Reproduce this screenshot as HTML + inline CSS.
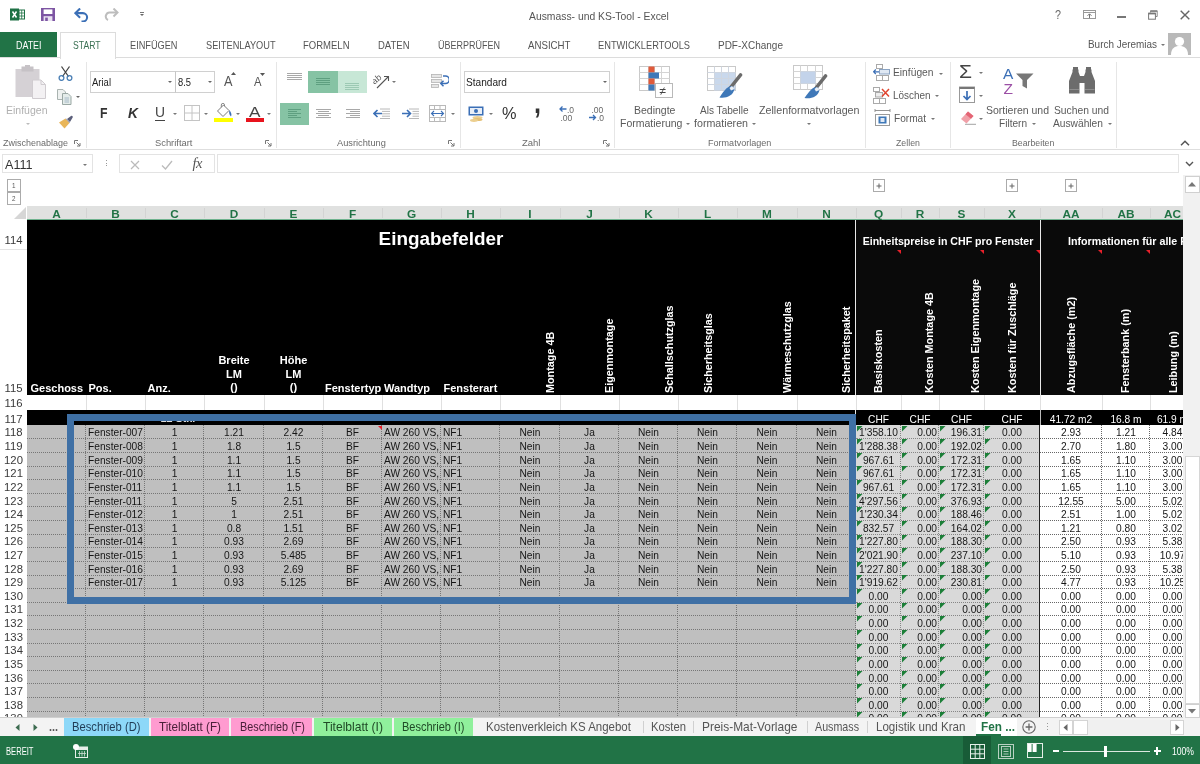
<!DOCTYPE html>
<html lang="de"><head><meta charset="utf-8"><title>Ausmass- und KS-Tool - Excel</title>
<style>
*{box-sizing:border-box;margin:0;padding:0}
html,body{width:1200px;height:764px;overflow:hidden;background:#fff}
body{position:relative;font-family:"Liberation Sans",sans-serif;color:#444;font-size:11px}
#w{position:absolute;left:0;top:0;width:1200px;height:764px;will-change:transform}
.abs{position:absolute}
.t{position:absolute;white-space:nowrap;line-height:1;color:#444;transform-origin:0 0}
#grid{position:absolute;left:0;width:1183px;height:511.5px;overflow:hidden;background:#fff}
.c{position:absolute;white-space:nowrap;overflow:hidden;font-size:10.2px;line-height:1;height:12.5px;color:#151515;text-align:center}
.rh{position:absolute;left:0;width:27px;text-align:center;font-size:11.3px;color:#3a3a3a;line-height:1}
.ch{position:absolute;top:1px;height:13px;line-height:14px;text-align:center;font-weight:bold;font-size:11.8px;color:#217346}
.vt{position:absolute;color:#fff;font-weight:bold;font-size:10.8px;white-space:nowrap;transform-origin:0 0;transform:rotate(-90deg);line-height:12px;height:12px}
.hb{position:absolute;color:#fff;font-weight:bold;font-size:11px;white-space:nowrap;line-height:13.6px;text-align:center}
.dl{height:0}

.gl{position:absolute;top:62px;width:1px;height:86px;background:#e6e6e6}
</style></head>
<body>
<div id="w">
<svg class="abs" style="left:10px;top:8px" width="15" height="13" viewBox="0 0 15 13"><rect x="0" y="0.5" width="9" height="12" fill="#1e7145"/><rect x="9" y="2" width="5.5" height="9" fill="#fff" stroke="#1e7145" stroke-width="1"/><path d="M9,5H14.5M9,8H14.5M11.7,2V11" stroke="#1e7145" stroke-width="0.8"/><path d="M2.5,3.5L6.5,9.5M6.5,3.5L2.5,9.5" stroke="#fff" stroke-width="1.5"/></svg>
<svg class="abs" style="left:41px;top:8px" width="14" height="13" viewBox="0 0 14 13"><path d="M0,0H14V13H0Z" fill="#7d55a3"/><rect x="2.6" y="1.4" width="8.8" height="4.6" fill="#fff"/><rect x="2.6" y="8.2" width="8.8" height="4.8" fill="#e9e2f1"/><rect x="4.2" y="9.6" width="2.6" height="3.4" fill="#7d55a3"/></svg>
<svg class="abs" style="left:73.5px;top:7.5px" width="15" height="14" viewBox="0 0 16 15"><path d="M2,5.5H9.5A4.5,4.5 0 0 1 9.5,14.5H8" fill="none" stroke="#3b6fb6" stroke-width="2.2"/><path d="M6.5,0.5L1.5,5.5L6.5,10.5" fill="none" stroke="#3b6fb6" stroke-width="2.2"/></svg>
<svg class="abs" style="left:104px;top:8px" width="15" height="13" viewBox="0 0 15 13"><path d="M13,4.5H6.5A4,4 0 0 0 4,12" fill="none" stroke="#bdbdbd" stroke-width="2"/><path d="M9.5,0.5L13.5,4.5L9.5,8.5" fill="none" stroke="#bdbdbd" stroke-width="2"/></svg>
<div class="abs" style="left:140px;top:11.5px;width:4px;height:1px;background:#777;"></div>
<svg class="abs" style="left:140px;top:13.5px" width="4" height="2.5" viewBox="0 0 4 2.5"><polygon points="0,0 4,0 2,2" fill="#666"/></svg>
<div class="t" style="left:529.0px;top:11px;font-size:11.3px;color:#555;transform:scaleX(0.917);">Ausmass- und KS-Tool - Excel</div>
<div class="t" style="left:1055.0px;top:9px;font-size:12.5px;color:#666;transform:scaleX(0.863);">?</div>
<svg class="abs" style="left:1083px;top:10px" width="13" height="9" viewBox="0 0 13 9"><rect x="0.5" y="0.5" width="12" height="8" fill="#fff" stroke="#999"/><path d="M0.5,2.5H12.5" stroke="#999"/><path d="M6.5,8V4M4.5,5.8L6.5,3.8L8.5,5.8" fill="none" stroke="#777"/></svg>
<div class="abs" style="left:1117px;top:16px;width:9px;height:1.6px;background:#777;"></div>
<svg class="abs" style="left:1148px;top:10px" width="10" height="10" viewBox="0 0 10 10"><path d="M2.5,2.5V0.8H9.2V6.5H7.5" fill="none" stroke="#888" stroke-width="1"/><path d="M2.5,1.2H9.2" stroke="#888" stroke-width="1.6"/><rect x="0.6" y="3.2" width="6.8" height="6" fill="#fff" stroke="#777" stroke-width="1"/><path d="M0.6,3.6H7.4" stroke="#777" stroke-width="1.6"/></svg>
<svg class="abs" style="left:1180px;top:10px" width="10" height="10" viewBox="0 0 10 10"><path d="M0.7,0.7L9.3,9.3M9.3,0.7L0.7,9.3" stroke="#666" stroke-width="1.4"/></svg>
<div class="abs" style="left:0px;top:32px;width:57px;height:25.5px;background:#217346;"></div>
<div class="t" style="left:16.0px;top:40px;font-size:10.8px;color:#fff;transform:scaleX(0.822);">DATEI</div>
<div class="abs" style="left:0px;top:57px;width:1200px;height:1px;background:#dcdcdc;"></div>
<div class="abs" style="left:59.5px;top:31.5px;width:56px;height:27px;background:#fff;border:1px solid #dcdcdc;border-bottom:none"></div>
<div class="t" style="left:73.0px;top:40px;font-size:10.8px;color:#3a7053;transform:scaleX(0.799);">START</div>
<div class="t" style="left:130.0px;top:40px;font-size:10.8px;color:#555;transform:scaleX(0.851);">EINF&Uuml;GEN</div>
<div class="t" style="left:205.5px;top:40px;font-size:10.8px;color:#555;transform:scaleX(0.854);">SEITENLAYOUT</div>
<div class="t" style="left:303.0px;top:40px;font-size:10.8px;color:#555;transform:scaleX(0.881);">FORMELN</div>
<div class="t" style="left:378.0px;top:40px;font-size:10.8px;color:#555;transform:scaleX(0.880);">DATEN</div>
<div class="t" style="left:437.5px;top:40px;font-size:10.8px;color:#555;transform:scaleX(0.833);">&Uuml;BERPR&Uuml;FEN</div>
<div class="t" style="left:527.5px;top:40px;font-size:10.8px;color:#555;transform:scaleX(0.897);">ANSICHT</div>
<div class="t" style="left:598.0px;top:40px;font-size:10.8px;color:#555;transform:scaleX(0.860);">ENTWICKLERTOOLS</div>
<div class="t" style="left:718.0px;top:40px;font-size:10.8px;color:#555;transform:scaleX(0.925);">PDF-XChange</div>
<div class="t" style="left:1088.0px;top:39px;font-size:11.3px;color:#555;transform:scaleX(0.879);">Burch Jeremias</div>
<svg class="abs" style="left:1161px;top:44.0px" width="4" height="2.5" viewBox="0 0 4 2.5"><polygon points="0,0 4,0 2,2" fill="#777"/></svg>
<svg class="abs" style="left:1168px;top:33px" width="23" height="22" viewBox="0 0 23 22"><rect width="23" height="22" fill="#b9b9b9"/><circle cx="11.5" cy="8.5" r="4.6" fill="#fff"/><path d="M3,22C3,15 7,13 11.5,13C16,13 20,15 20,22Z" fill="#fff"/></svg>
<div class="abs" style="left:0px;top:148.6px;width:1200px;height:1px;background:#dedede;"></div>
<div class="gl" style="left:86px"></div>
<div class="gl" style="left:275.5px"></div>
<div class="gl" style="left:460px"></div>
<div class="gl" style="left:614px"></div>
<div class="gl" style="left:865px"></div>
<div class="gl" style="left:950px"></div>
<div class="gl" style="left:1116px"></div>
<svg class="abs" style="left:15px;top:65px" width="31" height="34" viewBox="0 0 31 34"><rect x="0.5" y="4" width="24" height="28" fill="#d5d1d5"/><rect x="6.5" y="1.5" width="12" height="5" fill="#c6c2c6"/><rect x="10" y="0" width="5" height="3" fill="#c6c2c6"/><path d="M17.5,15H26L30.5,19.5V33.5H17.5Z" fill="#f3f1f3" stroke="#d0ccd0"/><path d="M26,15V19.5H30.5" fill="none" stroke="#d0ccd0"/></svg>
<div class="t" style="left:6.0px;top:105px;font-size:10.8px;color:#b0b0b0;transform:scaleX(0.973);">Einf&uuml;gen</div>
<svg class="abs" style="left:25.5px;top:122.5px" width="4" height="2.5" viewBox="0 0 4 2.5"><polygon points="0,0 4,0 2,2" fill="#bbb"/></svg>
<svg class="abs" style="left:58px;top:66px" width="15" height="15" viewBox="0 0 15 15"><path d="M3.5,0.5L10.5,10.5M11.5,0.5L4.5,10.5" stroke="#444" stroke-width="1.3" fill="none"/><circle cx="3.5" cy="12" r="2.4" fill="none" stroke="#4a7fb5" stroke-width="1.3"/><circle cx="11.5" cy="12" r="2.4" fill="none" stroke="#4a7fb5" stroke-width="1.3"/></svg>
<svg class="abs" style="left:57px;top:89px" width="15" height="16" viewBox="0 0 15 16"><path d="M0.5,0.5H6L8.5,3V10.5H0.5Z" fill="#eef1f0" stroke="#a9b3b0"/><path d="M5.5,4.5H11L14,7.5V15.5H5.5Z" fill="#e4ecea" stroke="#9aa8a4"/><path d="M7.5,9H12M7.5,11H12M7.5,13H12" stroke="#9fb4c4" stroke-width="0.9"/></svg>
<svg class="abs" style="left:76px;top:96.0px" width="4" height="2.5" viewBox="0 0 4 2.5"><polygon points="0,0 4,0 2,2" fill="#666"/></svg>
<svg class="abs" style="left:58px;top:115px" width="16" height="14" viewBox="0 0 16 14"><path d="M9,4L12,7L14.8,2.2A1.2,1.2 0 0 0 13,1Z" fill="#5b5f7a"/><path d="M1,7.5L7.5,3.5L11.5,8L6.5,13.5Z" fill="#e9b65a"/><path d="M7.5,3.5L9,4L12,7L11.5,8Z" fill="#8a8fa5"/></svg>
<div class="t" style="left:3.0px;top:138px;font-size:9.9px;color:#6a6a6a;transform:scaleX(0.909);">Zwischenablage</div>
<svg class="abs" style="left:74px;top:140px" width="7" height="7" viewBox="0 0 7 7"><path d="M0.5,4V0.5H4" fill="none" stroke="#777" stroke-width="1"/><path d="M2.5,2.5L6,6M6,3V6H3" fill="none" stroke="#777" stroke-width="1"/></svg>
<div class="abs" style="left:90px;top:71px;width:85.5px;height:21.5px;background:#fff;border:1px solid #d0d0d0;"></div>
<div class="abs" style="left:175px;top:71px;width:40px;height:21.5px;background:#fff;border:1px solid #d0d0d0;border-left:1px solid #c6c6c6"></div>
<div class="t" style="left:92.0px;top:77px;font-size:11.8px;color:#222;transform:scaleX(0.805);">Arial</div>
<svg class="abs" style="left:168px;top:80.5px" width="4" height="2.5" viewBox="0 0 4 2.5"><polygon points="0,0 4,0 2,2" fill="#666"/></svg>
<div class="t" style="left:177.5px;top:77px;font-size:11.8px;color:#222;transform:scaleX(0.792);">8.5</div>
<svg class="abs" style="left:207.5px;top:80.5px" width="4" height="2.5" viewBox="0 0 4 2.5"><polygon points="0,0 4,0 2,2" fill="#666"/></svg>
<div class="t" style="left:224.0px;top:74px;font-size:14.5px;color:#555;transform:scaleX(0.879);">A</div>
<svg class="abs" style="left:231px;top:72px" width="5" height="3" viewBox="0 0 5 3"><polygon points="0,3 2.5,0 5,3" fill="#555"/></svg>
<div class="t" style="left:253.5px;top:75px;font-size:13px;color:#555;transform:scaleX(0.865);">A</div>
<svg class="abs" style="left:260px;top:72.5px" width="5" height="3" viewBox="0 0 5 3"><polygon points="0,0 5,0 2.5,3" fill="#555"/></svg>
<div class="t" style="left:100.0px;top:105px;font-size:15px;color:#333;transform:scaleX(0.819);font-weight:bold;">F</div>
<div class="t" style="left:128.0px;top:105px;font-size:15px;color:#333;transform:scaleX(0.923);font-weight:bold;font-style:italic;">K</div>
<div class="t" style="left:155.0px;top:104px;font-size:15px;color:#444;transform:scaleX(0.923);">U</div>
<div class="abs" style="left:155px;top:119.5px;width:10px;height:1.2px;background:#444;"></div>
<svg class="abs" style="left:173px;top:112.5px" width="4" height="2.5" viewBox="0 0 4 2.5"><polygon points="0,0 4,0 2,2" fill="#777"/></svg>
<svg class="abs" style="left:184px;top:105px" width="16" height="16" viewBox="0 0 16 16"><rect x="0.5" y="0.5" width="15" height="15" fill="#fff" stroke="#c4c4c4"/><path d="M8,0.5V15.5M0.5,8H15.5" stroke="#c4c4c4"/></svg>
<svg class="abs" style="left:204px;top:112.5px" width="4" height="2.5" viewBox="0 0 4 2.5"><polygon points="0,0 4,0 2,2" fill="#777"/></svg>
<svg class="abs" style="left:215px;top:103px" width="18" height="15" viewBox="0 0 18 15"><path d="M2.5,8L8.5,2L14,7.5L8,13.5Z" fill="#fff" stroke="#7a7a7a" stroke-width="1"/><path d="M6.3,4.2V2A1.6,1.6 0 0 1 9.5,2V3.2" fill="none" stroke="#7a7a7a" stroke-width="0.9"/><path d="M14.3,7.2C16.3,9.4 17,11.4 16,13.4C14.4,12.2 13.8,10 14.3,7.2Z" fill="#3b6fb6"/></svg>
<div class="abs" style="left:214px;top:117.8px;width:18.5px;height:4.2px;background:#ffff00;"></div>
<svg class="abs" style="left:235.5px;top:112.5px" width="4" height="2.5" viewBox="0 0 4 2.5"><polygon points="0,0 4,0 2,2" fill="#777"/></svg>
<div class="t" style="left:248.5px;top:105px;font-size:14.5px;color:#444;transform:scaleX(1.189);">A</div>
<div class="abs" style="left:246px;top:117.8px;width:17.5px;height:4.2px;background:#e8131d;"></div>
<svg class="abs" style="left:266.5px;top:112.5px" width="4" height="2.5" viewBox="0 0 4 2.5"><polygon points="0,0 4,0 2,2" fill="#777"/></svg>
<div class="t" style="left:155.0px;top:138px;font-size:9.9px;color:#6a6a6a;transform:scaleX(0.947);">Schriftart</div>
<svg class="abs" style="left:265px;top:140px" width="7" height="7" viewBox="0 0 7 7"><path d="M0.5,4V0.5H4" fill="none" stroke="#777" stroke-width="1"/><path d="M2.5,2.5L6,6M6,3V6H3" fill="none" stroke="#777" stroke-width="1"/></svg>
<svg class="abs" style="left:287px;top:73px" width="15" height="8" viewBox="0 0 15 8"><rect x="0" y="0" width="15" height="1" fill="#a8a8a8"/><rect x="0" y="2" width="15" height="1" fill="#a8a8a8"/><rect x="0" y="4" width="15" height="1" fill="#a8a8a8"/><rect x="0" y="6" width="15" height="1" fill="#a8a8a8"/></svg>
<div class="abs" style="left:308px;top:71px;width:29.5px;height:21.5px;background:#86c3a4;"></div>
<svg class="abs" style="left:316px;top:78px" width="14" height="8" viewBox="0 0 14 8"><rect x="0" y="0" width="14" height="1" fill="#5e9f80"/><rect x="0" y="2" width="14" height="1" fill="#5e9f80"/><rect x="0" y="4" width="14" height="1" fill="#5e9f80"/><rect x="0" y="6" width="14" height="1" fill="#5e9f80"/></svg>
<div class="abs" style="left:337.5px;top:71px;width:29px;height:21.5px;background:#c7e7d6;"></div>
<svg class="abs" style="left:345px;top:83px" width="14" height="8" viewBox="0 0 14 8"><rect x="0" y="0" width="14" height="1" fill="#9cc9b3"/><rect x="0" y="2" width="14" height="1" fill="#9cc9b3"/><rect x="0" y="4" width="14" height="1" fill="#9cc9b3"/><rect x="0" y="6" width="14" height="1" fill="#9cc9b3"/></svg>
<div class="abs" style="left:280px;top:103px;width:29px;height:21.5px;background:#86c3a4;"></div>
<svg class="abs" style="left:288px;top:109px" width="13" height="10" viewBox="0 0 13 10"><rect x="0" y="0" width="13" height="1" fill="#5e9f80"/><rect x="0" y="2" width="9" height="1" fill="#5e9f80"/><rect x="0" y="4" width="13" height="1" fill="#5e9f80"/><rect x="0" y="6" width="9" height="1" fill="#5e9f80"/><rect x="0" y="8" width="13" height="1" fill="#5e9f80"/></svg>
<svg class="abs" style="left:316px;top:109px" width="15" height="10" viewBox="0 0 15 10"><rect x="0.0" y="0" width="15" height="1" fill="#a8a8a8"/><rect x="2.0" y="2" width="11" height="1" fill="#a8a8a8"/><rect x="0.0" y="4" width="15" height="1" fill="#a8a8a8"/><rect x="2.0" y="6" width="11" height="1" fill="#a8a8a8"/><rect x="0.0" y="8" width="15" height="1" fill="#a8a8a8"/></svg>
<svg class="abs" style="left:346px;top:109px" width="14" height="10" viewBox="0 0 14 10"><rect x="0" y="0" width="14" height="1" fill="#a8a8a8"/><rect x="4" y="2" width="10" height="1" fill="#a8a8a8"/><rect x="0" y="4" width="14" height="1" fill="#a8a8a8"/><rect x="4" y="6" width="10" height="1" fill="#a8a8a8"/><rect x="0" y="8" width="14" height="1" fill="#a8a8a8"/></svg>
<svg class="abs" style="left:373px;top:72px" width="17" height="17" viewBox="0 0 17 17"><text x="0" y="9" font-family="Liberation Sans,sans-serif" font-size="9" fill="#555" transform="rotate(-38 6 9)">ab</text><path d="M4,16L15,5M11,4.5H15.5V9" fill="none" stroke="#555" stroke-width="1.1"/></svg>
<svg class="abs" style="left:391.5px;top:80.5px" width="4" height="2.5" viewBox="0 0 4 2.5"><polygon points="0,0 4,0 2,2" fill="#777"/></svg>
<svg class="abs" style="left:431px;top:74px" width="18" height="14" viewBox="0 0 18 14"><rect x="0.5" y="0.5" width="10" height="3" fill="#e6e6e6" stroke="#b5b5b5" stroke-width="0.8"/><rect x="0.5" y="5.5" width="10" height="3" fill="#e6e6e6" stroke="#b5b5b5" stroke-width="0.8"/><rect x="0.5" y="10.5" width="7" height="3" fill="#e6e6e6" stroke="#b5b5b5" stroke-width="0.8"/><path d="M12,2H14.5A2.5,2.5 0 0 1 14.5,9.5H10" fill="none" stroke="#3b6fb6" stroke-width="1.5"/><path d="M12.5,6.8L9.8,9.5L12.5,12.2" fill="none" stroke="#3b6fb6" stroke-width="1.5"/></svg>
<svg class="abs" style="left:373px;top:107.5px" width="17" height="11" viewBox="0 0 17 11"><path d="M7,1H17M9,3.4H17M9,5.8H17M9,8.2H17M7,10.5H17" stroke="#b0b0b0" stroke-width="0.9"/><path d="M9,5.5H1.2M4.5,2L1,5.5L4.5,9" fill="none" stroke="#3b6fb6" stroke-width="1.6"/></svg>
<svg class="abs" style="left:402px;top:107.5px" width="17" height="11" viewBox="0 0 17 11"><path d="M7,1H17M10.5,3.4H17M10.5,5.8H17M10.5,8.2H17M7,10.5H17" stroke="#b0b0b0" stroke-width="0.9"/><path d="M0,5.5H8M5,2L8.5,5.5L5,9" fill="none" stroke="#3b6fb6" stroke-width="1.6"/></svg>
<svg class="abs" style="left:429px;top:105px" width="17" height="17" viewBox="0 0 17 17"><rect x="0.5" y="0.5" width="16" height="16" fill="#fff" stroke="#b9b9b9"/><path d="M0.5,4.5H16.5M0.5,12.5H16.5M5.5,0.5V4.5M11,0.5V4.5M5.5,12.5V16.5M11,12.5V16.5" stroke="#b9b9b9"/><path d="M2.5,8.5H14.5M5,6L2.5,8.5L5,11M12,6L14.5,8.5L12,11" fill="none" stroke="#3b6fb6" stroke-width="1.1"/></svg>
<svg class="abs" style="left:450.5px;top:112.5px" width="4" height="2.5" viewBox="0 0 4 2.5"><polygon points="0,0 4,0 2,2" fill="#777"/></svg>
<div class="t" style="left:336.5px;top:138px;font-size:9.9px;color:#6a6a6a;transform:scaleX(0.937);">Ausrichtung</div>
<svg class="abs" style="left:448px;top:140px" width="7" height="7" viewBox="0 0 7 7"><path d="M0.5,4V0.5H4" fill="none" stroke="#777" stroke-width="1"/><path d="M2.5,2.5L6,6M6,3V6H3" fill="none" stroke="#777" stroke-width="1"/></svg>
<div class="abs" style="left:463.5px;top:71px;width:146.5px;height:21.5px;background:#fff;border:1px solid #d0d0d0;"></div>
<div class="t" style="left:465.5px;top:77px;font-size:11.8px;color:#222;transform:scaleX(0.856);">Standard</div>
<svg class="abs" style="left:603px;top:80.5px" width="4" height="2.5" viewBox="0 0 4 2.5"><polygon points="0,0 4,0 2,2" fill="#666"/></svg>
<svg class="abs" style="left:468px;top:105.5px" width="17" height="16" viewBox="0 0 17 16"><rect x="0.5" y="0.5" width="15" height="9" fill="#3b6fb6"/><rect x="2" y="2" width="12" height="6" fill="#e8eef7"/><circle cx="8" cy="5" r="2" fill="#3b6fb6"/><ellipse cx="9.5" cy="11.5" rx="5" ry="1.6" fill="#eccf8f"/><ellipse cx="9.5" cy="13.5" rx="5" ry="1.6" fill="#e4bf75"/><ellipse cx="6" cy="14.5" rx="4" ry="1.4" fill="#eccf8f"/></svg>
<svg class="abs" style="left:488.5px;top:112.5px" width="4" height="2.5" viewBox="0 0 4 2.5"><polygon points="0,0 4,0 2,2" fill="#777"/></svg>
<div class="t" style="left:502.0px;top:105px;font-size:17px;color:#333;transform:scaleX(0.959);">%</div>
<div class="t" style="left:534.0px;top:88px;font-size:30px;color:#333;transform:scaleX(0.840);font-weight:bold;">,</div>
<svg class="abs" style="left:559px;top:105px" width="18" height="17" viewBox="0 0 18 17"><text x="8" y="7.5" font-family="Liberation Sans,sans-serif" font-size="8.5" fill="#666">.0</text><text x="1.5" y="16" font-family="Liberation Sans,sans-serif" font-size="8.5" fill="#666">.00</text><path d="M7.5,4H1.2M3.5,1.5L1,4L3.5,6.5" fill="none" stroke="#3b6fb6" stroke-width="1.3"/></svg>
<svg class="abs" style="left:588px;top:105px" width="18" height="17" viewBox="0 0 18 17"><text x="3.5" y="7.5" font-family="Liberation Sans,sans-serif" font-size="8.5" fill="#666">.00</text><text x="9" y="16" font-family="Liberation Sans,sans-serif" font-size="8.5" fill="#666">.0</text><path d="M1,12.5H7.3M5,10L7.5,12.5L5,15" fill="none" stroke="#3b6fb6" stroke-width="1.3"/></svg>
<div class="t" style="left:521.5px;top:138px;font-size:9.9px;color:#6a6a6a;transform:scaleX(0.961);">Zahl</div>
<svg class="abs" style="left:603px;top:140px" width="7" height="7" viewBox="0 0 7 7"><path d="M0.5,4V0.5H4" fill="none" stroke="#777" stroke-width="1"/><path d="M2.5,2.5L6,6M6,3V6H3" fill="none" stroke="#777" stroke-width="1"/></svg>
<svg class="abs" style="left:639px;top:66px" width="34" height="32" viewBox="0 0 34 32"><rect x="0.5" y="0.5" width="30" height="24" fill="#fff" stroke="#c9c9c9"/><path d="M0.5,6.5H30.5M0.5,12.5H30.5M0.5,18.5H30.5M9.5,0.5V24.5M15.5,0.5V24.5M22.5,0.5V24.5" stroke="#d4d4d4"/><rect x="9.5" y="0.5" width="6" height="6" fill="#e05a3a"/><rect x="9.5" y="6.5" width="10.5" height="6" fill="#3f78b8"/><rect x="9.5" y="12.5" width="6" height="6" fill="#e05a3a"/><rect x="9.5" y="18.5" width="6" height="6" fill="#3f78b8"/><rect x="16.5" y="17.5" width="17" height="14" fill="#fff" stroke="#b9b9b9"/><text x="20.5" y="29" font-family="Liberation Sans,sans-serif" font-size="12" fill="#444">&#8800;</text></svg>
<div class="t" style="left:634.0px;top:105px;font-size:10.5px;color:#5a5a5a;">Bedingte</div>
<div class="t" style="left:620.0px;top:118px;font-size:10.5px;color:#5a5a5a;">Formatierung</div>
<svg class="abs" style="left:686px;top:123.0px" width="4" height="2.5" viewBox="0 0 4 2.5"><polygon points="0,0 4,0 2,2" fill="#777"/></svg>
<svg class="abs" style="left:707px;top:66px" width="36" height="33" viewBox="0 0 36 33"><rect x="0.5" y="0.5" width="28" height="24" fill="#fff" stroke="#c9c9c9"/><rect x="7.5" y="6.5" width="21" height="18" fill="#c9d8ec"/><path d="M0.5,6.5H28.5M0.5,12.5H28.5M0.5,18.5H28.5M7.5,0.5V24.5M14.5,0.5V24.5M21.5,0.5V24.5" stroke="#cfd6e0"/><path d="M33.5,9L24,21" stroke="#6b6b6b" stroke-width="3.6" stroke-linecap="round"/><path d="M25,20C21,20 18,23 12.5,31.5C19,32.5 26,30 27.5,23Z" fill="#3f78b8"/><path d="M25,20L27.5,23L24,24.5L22.5,22Z" fill="#e9eef5"/></svg>
<div class="t" style="left:700.0px;top:105px;font-size:10.5px;color:#5a5a5a;transform:scaleX(0.959);">Als Tabelle</div>
<div class="t" style="left:693.5px;top:118px;font-size:10.5px;color:#5a5a5a;transform:scaleX(1.017);">formatieren</div>
<svg class="abs" style="left:751.5px;top:123.0px" width="4" height="2.5" viewBox="0 0 4 2.5"><polygon points="0,0 4,0 2,2" fill="#777"/></svg>
<svg class="abs" style="left:793px;top:65px" width="35" height="34" viewBox="0 0 35 34"><rect x="0.5" y="0.5" width="29" height="24" fill="#fff" stroke="#c9c9c9"/><path d="M0.5,6.5H29.5M0.5,12.5H29.5M0.5,18.5H29.5M7.5,0.5V24.5M14.5,0.5V24.5M22.5,0.5V24.5" stroke="#d4d4d4"/><rect x="7.5" y="6.5" width="15" height="12" fill="#c3d3ea"/><path d="M32.5,11L23,23" stroke="#6b6b6b" stroke-width="3.6" stroke-linecap="round"/><path d="M24,22C20,22 17,25 11.5,33C18,34 25,32 26.5,25Z" fill="#3f78b8"/><path d="M24,22L26.5,25L23,26.5L21.5,24Z" fill="#e9eef5"/></svg>
<div class="t" style="left:758.5px;top:105px;font-size:10.5px;color:#5a5a5a;transform:scaleX(1.019);">Zellenformatvorlagen</div>
<svg class="abs" style="left:807px;top:123.0px" width="4" height="2.5" viewBox="0 0 4 2.5"><polygon points="0,0 4,0 2,2" fill="#777"/></svg>
<div class="t" style="left:707.5px;top:138px;font-size:9.9px;color:#6a6a6a;transform:scaleX(0.916);">Formatvorlagen</div>
<svg class="abs" style="left:873px;top:64px" width="17" height="17" viewBox="0 0 17 17"><rect x="3.5" y="0.5" width="6" height="4" fill="#fff" stroke="#aaa"/><rect x="3.5" y="11.5" width="6" height="5" fill="#fff" stroke="#aaa"/><rect x="9.5" y="11.5" width="6" height="5" fill="#fff" stroke="#aaa"/><rect x="6.5" y="5.5" width="10" height="4.5" fill="#dfe8f3" stroke="#8aa3c2"/><path d="M6,7.8H0.8M2.8,5.5L0.6,7.8L2.8,10" fill="none" stroke="#3b6fb6" stroke-width="1.2"/></svg>
<div class="t" style="left:892.5px;top:67px;font-size:10.5px;color:#5a5a5a;transform:scaleX(0.977);">Einf&uuml;gen</div>
<svg class="abs" style="left:939px;top:72.5px" width="4" height="2.5" viewBox="0 0 4 2.5"><polygon points="0,0 4,0 2,2" fill="#777"/></svg>
<svg class="abs" style="left:873px;top:87px" width="17" height="17" viewBox="0 0 17 17"><rect x="0.5" y="0.5" width="6" height="4" fill="#fff" stroke="#aaa"/><rect x="0.5" y="11.5" width="6" height="5" fill="#fff" stroke="#aaa"/><rect x="6.5" y="11.5" width="6" height="5" fill="#fff" stroke="#aaa"/><rect x="2.5" y="5.5" width="7" height="4.5" fill="#eee" stroke="#aaa"/><path d="M9,2L16,9.5M16,2L9,9.5" stroke="#e0452f" stroke-width="1.5"/></svg>
<div class="t" style="left:892.5px;top:90px;font-size:10.5px;color:#5a5a5a;transform:scaleX(0.945);">L&ouml;schen</div>
<svg class="abs" style="left:935px;top:95.0px" width="4" height="2.5" viewBox="0 0 4 2.5"><polygon points="0,0 4,0 2,2" fill="#777"/></svg>
<svg class="abs" style="left:874px;top:109px" width="17" height="18" viewBox="0 0 17 18"><path d="M1,1.5H16M1,0V3M16,0V3" stroke="#888" stroke-width="0.9"/><rect x="1.5" y="5.5" width="14" height="11" fill="#fff" stroke="#9a9a9a"/><rect x="4.5" y="7.5" width="8" height="7" fill="#3f78b8"/><rect x="6.5" y="9" width="4" height="4" fill="#dfe8f3"/></svg>
<div class="t" style="left:894.0px;top:113px;font-size:10.5px;color:#5a5a5a;transform:scaleX(0.962);">Format</div>
<svg class="abs" style="left:930.5px;top:117.5px" width="4" height="2.5" viewBox="0 0 4 2.5"><polygon points="0,0 4,0 2,2" fill="#777"/></svg>
<div class="t" style="left:895.5px;top:138px;font-size:9.9px;color:#6a6a6a;transform:scaleX(0.890);">Zellen</div>
<div class="t" style="left:959.0px;top:63px;font-size:18px;color:#444;transform:scaleX(1.168);">&Sigma;</div>
<svg class="abs" style="left:978.5px;top:71.5px" width="4" height="2.5" viewBox="0 0 4 2.5"><polygon points="0,0 4,0 2,2" fill="#777"/></svg>
<svg class="abs" style="left:959px;top:86px" width="17" height="18" viewBox="0 0 17 18"><rect x="0.5" y="1" width="15" height="15.5" fill="#fff" stroke="#999"/><path d="M0.5,2H15.5" stroke="#777" stroke-width="2"/><path d="M8,5V13.5M4.5,10L8,13.5L11.5,10" fill="none" stroke="#3b6fb6" stroke-width="1.7"/></svg>
<svg class="abs" style="left:978.5px;top:94.5px" width="4" height="2.5" viewBox="0 0 4 2.5"><polygon points="0,0 4,0 2,2" fill="#777"/></svg>
<svg class="abs" style="left:960px;top:110px" width="17" height="15" viewBox="0 0 17 15"><path d="M1,9L8,1.5L13.5,6L6.5,13.5Z" fill="#f0a0a8"/><path d="M8,1.5L13.5,6L11,8.7L5.5,4.2Z" fill="#e46474"/><path d="M5,14.3H16" stroke="#999" stroke-width="0.9"/></svg>
<svg class="abs" style="left:978.5px;top:117.5px" width="4" height="2.5" viewBox="0 0 4 2.5"><polygon points="0,0 4,0 2,2" fill="#777"/></svg>
<svg class="abs" style="left:1003px;top:66px" width="31" height="29" viewBox="0 0 31 29"><text x="0" y="13" font-family="Liberation Sans,sans-serif" font-size="15.5" fill="#3b6fb6">A</text><text x="0.5" y="28" font-family="Liberation Sans,sans-serif" font-size="15.5" fill="#9b4fa5">Z</text><path d="M13,7.5H30.5L24,14V22.5L19.5,20V14Z" fill="#777"/></svg>
<div class="t" style="left:986.0px;top:105px;font-size:10.5px;color:#5a5a5a;">Sortieren und</div>
<div class="t" style="left:999.0px;top:118px;font-size:10.5px;color:#5a5a5a;transform:scaleX(0.960);">Filtern</div>
<svg class="abs" style="left:1032px;top:123.0px" width="4" height="2.5" viewBox="0 0 4 2.5"><polygon points="0,0 4,0 2,2" fill="#777"/></svg>
<svg class="abs" style="left:1067px;top:67px" width="30" height="27" viewBox="0 0 30 27"><path d="M2,26.5V14L5.5,5V2.5H11.5V5L13,9H17L18.5,5V2.5H24.5V5L28,14V26.5H17.5V16H12.5V26.5Z" fill="#6c6c6c"/><rect x="6" y="0" width="5" height="3" fill="#6c6c6c"/><rect x="19" y="0" width="5" height="3" fill="#6c6c6c"/><path d="M2.5,22.5H12M18,22.5H27.5" stroke="#8d8d8d" stroke-width="1.2"/></svg>
<div class="t" style="left:1054.0px;top:105px;font-size:10.5px;color:#5a5a5a;transform:scaleX(0.981);">Suchen und</div>
<div class="t" style="left:1053.0px;top:118px;font-size:10.5px;color:#5a5a5a;transform:scaleX(0.973);">Ausw&auml;hlen</div>
<svg class="abs" style="left:1107.5px;top:123.0px" width="4" height="2.5" viewBox="0 0 4 2.5"><polygon points="0,0 4,0 2,2" fill="#777"/></svg>
<div class="t" style="left:1011.5px;top:138px;font-size:9.9px;color:#6a6a6a;transform:scaleX(0.887);">Bearbeiten</div>
<svg class="abs" style="left:1180px;top:139.5px" width="10" height="6" viewBox="0 0 10 6"><path d="M1,5.2L5,1.2L9,5.2" fill="none" stroke="#555" stroke-width="1.5"/></svg>
<div class="abs" style="left:2px;top:154px;width:90.5px;height:18.8px;background:#fff;border:1px solid #e3e3e3;"></div>
<div class="t" style="left:5.0px;top:159px;font-size:12.6px;color:#333;">A111</div>
<svg class="abs" style="left:83px;top:163.5px" width="4" height="2.5" viewBox="0 0 4 2.5"><polygon points="0,0 4,0 2,2" fill="#777"/></svg>
<div class="abs" style="left:105.6px;top:160px;width:1.2px;height:1.2px;background:#999;"></div>
<div class="abs" style="left:105.6px;top:162.5px;width:1.2px;height:1.2px;background:#999;"></div>
<div class="abs" style="left:105.6px;top:165px;width:1.2px;height:1.2px;background:#999;"></div>
<div class="abs" style="left:119px;top:154px;width:95.5px;height:18.8px;background:#fff;border:1px solid #e3e3e3;"></div>
<svg class="abs" style="left:130px;top:159.5px" width="10" height="10" viewBox="0 0 10 10"><path d="M1,1L9,9M9,1L1,9" stroke="#bbb" stroke-width="1.2"/></svg>
<svg class="abs" style="left:161px;top:159.5px" width="12" height="10" viewBox="0 0 12 10"><path d="M1,5.5L4.5,9L11,1" fill="none" stroke="#bbb" stroke-width="1.3"/></svg>
<div class="t" style="left:192.5px;top:156px;font-family:'Liberation Serif',serif;font-style:italic;font-size:14.5px;color:#555;letter-spacing:-0.5px">fx</div>
<div class="abs" style="left:217px;top:154px;width:962px;height:18.8px;background:#fff;border:1px solid #e3e3e3;"></div>
<svg class="abs" style="left:1185px;top:161px" width="9" height="6" viewBox="0 0 9 6"><path d="M1,1L4.5,4.5L8,1" fill="none" stroke="#555" stroke-width="1.4"/></svg>
<div class="abs" style="left:7px;top:178.5px;width:13.5px;height:13px;background:#fff;border:1px solid #ababab;"></div>
<div class="t" style="left:12.0px;top:182px;font-size:7.5px;color:#555;transform:scaleX(0.839);">1</div>
<div class="abs" style="left:7px;top:191.7px;width:13.5px;height:13px;background:#fff;border:1px solid #ababab;"></div>
<div class="t" style="left:12.0px;top:195px;font-size:7.5px;color:#555;transform:scaleX(0.839);">2</div>
<div class="abs" style="left:872.5px;top:179px;width:12.5px;height:12.5px;background:#fff;border:1px solid #ababab;"></div>
<svg class="abs" style="left:876.0px;top:182.5px" width="6" height="6" viewBox="0 0 6 6"><path d="M3,0.5V5.5M0.5,3H5.5" stroke="#666" stroke-width="1"/></svg>
<div class="abs" style="left:1005.5px;top:179px;width:12.5px;height:12.5px;background:#fff;border:1px solid #ababab;"></div>
<svg class="abs" style="left:1009.0px;top:182.5px" width="6" height="6" viewBox="0 0 6 6"><path d="M3,0.5V5.5M0.5,3H5.5" stroke="#666" stroke-width="1"/></svg>
<div class="abs" style="left:1064.5px;top:179px;width:12.5px;height:12.5px;background:#fff;border:1px solid #ababab;"></div>
<svg class="abs" style="left:1068.0px;top:182.5px" width="6" height="6" viewBox="0 0 6 6"><path d="M3,0.5V5.5M0.5,3H5.5" stroke="#666" stroke-width="1"/></svg>
<div class="abs" style="left:1183px;top:175px;width:17px;height:542.5px;background:#f1f1f1;"></div>
<div class="abs" style="left:1184.5px;top:176px;width:15px;height:16.5px;background:#fff;border:1px solid #d0d0d0;"></div>
<svg class="abs" style="left:1188px;top:181.5px" width="8" height="5" viewBox="0 0 8 5"><polygon points="0,4.5 4,0 8,4.5" fill="#777"/></svg>
<div class="abs" style="left:1184.5px;top:455.5px;width:15.5px;height:248px;background:#fff;border:1px solid #d6d6d6;"></div>
<div class="abs" style="left:1184.5px;top:704px;width:15px;height:13.5px;background:#fff;border:1px solid #d0d0d0;"></div>
<svg class="abs" style="left:1188px;top:709px" width="8" height="5" viewBox="0 0 8 5"><polygon points="0,0 8,0 4,4.5" fill="#777"/></svg>
<div id="grid" style="top:206px">
<div class="abs" style="left:27px;top:0.3px;width:1156px;height:13.9px;background:#e0e1e0;border-bottom:1.6px solid #6fb28e"></div>
<svg class="abs" style="left:14px;top:1px" width="12" height="12"><polygon points="12,0 12,12 0,12" fill="#d6d6d6"/></svg>
<div class="ch" style="left:27px;width:59px">A</div>
<div class="ch" style="left:86px;width:59px">B</div>
<div class="ch" style="left:145px;width:59px">C</div>
<div class="ch" style="left:204px;width:60px">D</div>
<div class="ch" style="left:264px;width:59px">E</div>
<div class="ch" style="left:323px;width:59px">F</div>
<div class="ch" style="left:382px;width:59px">G</div>
<div class="ch" style="left:441px;width:59px">H</div>
<div class="ch" style="left:500px;width:60px">I</div>
<div class="ch" style="left:560px;width:59px">J</div>
<div class="ch" style="left:619px;width:59px">K</div>
<div class="ch" style="left:678px;width:59px">L</div>
<div class="ch" style="left:737px;width:60px">M</div>
<div class="ch" style="left:797px;width:59px">N</div>
<div class="ch" style="left:856px;width:45px">Q</div>
<div class="ch" style="left:901px;width:38px">R</div>
<div class="ch" style="left:939px;width:45px">S</div>
<div class="ch" style="left:984px;width:56px">X</div>
<div class="ch" style="left:1040px;width:62px">AA</div>
<div class="ch" style="left:1102px;width:48px">AB</div>
<div class="ch" style="left:1150px;width:45px">AC</div>
<div class="abs" style="left:85.5px;top:2px;width:1px;height:10px;background:#d3d3d3"></div>
<div class="abs" style="left:144.5px;top:2px;width:1px;height:10px;background:#d3d3d3"></div>
<div class="abs" style="left:203.5px;top:2px;width:1px;height:10px;background:#d3d3d3"></div>
<div class="abs" style="left:263.5px;top:2px;width:1px;height:10px;background:#d3d3d3"></div>
<div class="abs" style="left:322.5px;top:2px;width:1px;height:10px;background:#d3d3d3"></div>
<div class="abs" style="left:381.5px;top:2px;width:1px;height:10px;background:#d3d3d3"></div>
<div class="abs" style="left:440.5px;top:2px;width:1px;height:10px;background:#d3d3d3"></div>
<div class="abs" style="left:499.5px;top:2px;width:1px;height:10px;background:#d3d3d3"></div>
<div class="abs" style="left:559.5px;top:2px;width:1px;height:10px;background:#d3d3d3"></div>
<div class="abs" style="left:618.5px;top:2px;width:1px;height:10px;background:#d3d3d3"></div>
<div class="abs" style="left:677.5px;top:2px;width:1px;height:10px;background:#d3d3d3"></div>
<div class="abs" style="left:736.5px;top:2px;width:1px;height:10px;background:#d3d3d3"></div>
<div class="abs" style="left:796.5px;top:2px;width:1px;height:10px;background:#d3d3d3"></div>
<div class="abs" style="left:855.5px;top:2px;width:1px;height:10px;background:#d3d3d3"></div>
<div class="abs" style="left:900.5px;top:2px;width:1px;height:10px;background:#d3d3d3"></div>
<div class="abs" style="left:938.5px;top:2px;width:1px;height:10px;background:#d3d3d3"></div>
<div class="abs" style="left:983.5px;top:2px;width:1px;height:10px;background:#d3d3d3"></div>
<div class="abs" style="left:1039.5px;top:2px;width:1px;height:10px;background:#d3d3d3"></div>
<div class="abs" style="left:1101.5px;top:2px;width:1px;height:10px;background:#d3d3d3"></div>
<div class="abs" style="left:1149.5px;top:2px;width:1px;height:10px;background:#d3d3d3"></div>
<div class="abs" style="left:27px;top:14px;width:1156px;height:175.39999999999998px;background:#000"></div>
<div class="abs" style="left:856px;top:14px;width:327px;height:175.39999999999998px;background:#0a0a0a"></div>
<div class="abs" style="left:855.3px;top:14px;width:1.2px;height:175.39999999999998px;background:#e8e8e8"></div>
<div class="abs" style="left:1039.8px;top:14px;width:1.2px;height:175.39999999999998px;background:#e8e8e8"></div>
<div class="abs" style="left:85.5px;top:189.39999999999998px;width:1px;height:14.800000000000011px;background:#e0e0e0"></div>
<div class="abs" style="left:144.5px;top:189.39999999999998px;width:1px;height:14.800000000000011px;background:#e0e0e0"></div>
<div class="abs" style="left:203.5px;top:189.39999999999998px;width:1px;height:14.800000000000011px;background:#e0e0e0"></div>
<div class="abs" style="left:263.5px;top:189.39999999999998px;width:1px;height:14.800000000000011px;background:#e0e0e0"></div>
<div class="abs" style="left:322.5px;top:189.39999999999998px;width:1px;height:14.800000000000011px;background:#e0e0e0"></div>
<div class="abs" style="left:381.5px;top:189.39999999999998px;width:1px;height:14.800000000000011px;background:#e0e0e0"></div>
<div class="abs" style="left:440.5px;top:189.39999999999998px;width:1px;height:14.800000000000011px;background:#e0e0e0"></div>
<div class="abs" style="left:499.5px;top:189.39999999999998px;width:1px;height:14.800000000000011px;background:#e0e0e0"></div>
<div class="abs" style="left:559.5px;top:189.39999999999998px;width:1px;height:14.800000000000011px;background:#e0e0e0"></div>
<div class="abs" style="left:618.5px;top:189.39999999999998px;width:1px;height:14.800000000000011px;background:#e0e0e0"></div>
<div class="abs" style="left:677.5px;top:189.39999999999998px;width:1px;height:14.800000000000011px;background:#e0e0e0"></div>
<div class="abs" style="left:736.5px;top:189.39999999999998px;width:1px;height:14.800000000000011px;background:#e0e0e0"></div>
<div class="abs" style="left:796.5px;top:189.39999999999998px;width:1px;height:14.800000000000011px;background:#e0e0e0"></div>
<div class="abs" style="left:855.5px;top:189.39999999999998px;width:1px;height:14.800000000000011px;background:#e0e0e0"></div>
<div class="abs" style="left:900.5px;top:189.39999999999998px;width:1px;height:14.800000000000011px;background:#e0e0e0"></div>
<div class="abs" style="left:938.5px;top:189.39999999999998px;width:1px;height:14.800000000000011px;background:#e0e0e0"></div>
<div class="abs" style="left:983.5px;top:189.39999999999998px;width:1px;height:14.800000000000011px;background:#e0e0e0"></div>
<div class="abs" style="left:1039.5px;top:189.39999999999998px;width:1px;height:14.800000000000011px;background:#e0e0e0"></div>
<div class="abs" style="left:1101.5px;top:189.39999999999998px;width:1px;height:14.800000000000011px;background:#e0e0e0"></div>
<div class="abs" style="left:1149.5px;top:189.39999999999998px;width:1px;height:14.800000000000011px;background:#e0e0e0"></div>
<div class="abs" style="left:27px;top:204.2px;width:1156px;height:15.100000000000023px;background:#000"></div>
<div class="abs" style="left:855.3px;top:204.2px;width:1.2px;height:15.100000000000023px;background:#e8e8e8"></div>
<div class="abs" style="left:1039.8px;top:204.2px;width:1.2px;height:15.100000000000023px;background:#bbb"></div>
<div class="abs" style="left:27px;top:219.3px;width:829px;height:300.7px;background:#bfbfbf"></div>
<div class="abs" style="left:856px;top:219.3px;width:184px;height:300.7px;background:#d9d9d9"></div>
<div class="abs" style="left:1040px;top:219.3px;width:150px;height:300.7px;background:#fff"></div>
<div class="abs dl" style="left:27px;top:232.32px;width:829px;border-top:1px dotted #767676"></div>
<div class="abs dl" style="left:856px;top:232.32px;width:184px;border-top:1px dotted #868686"></div>
<div class="abs dl" style="left:1040px;top:232.32px;width:143px;border-top:1px dotted #666"></div>
<div class="abs dl" style="left:27px;top:245.94px;width:829px;border-top:1px dotted #767676"></div>
<div class="abs dl" style="left:856px;top:245.94px;width:184px;border-top:1px dotted #868686"></div>
<div class="abs dl" style="left:1040px;top:245.94px;width:143px;border-top:1px dotted #666"></div>
<div class="abs dl" style="left:27px;top:259.56px;width:829px;border-top:1px dotted #767676"></div>
<div class="abs dl" style="left:856px;top:259.56px;width:184px;border-top:1px dotted #868686"></div>
<div class="abs dl" style="left:1040px;top:259.56px;width:143px;border-top:1px dotted #666"></div>
<div class="abs dl" style="left:27px;top:273.18px;width:829px;border-top:1px dotted #767676"></div>
<div class="abs dl" style="left:856px;top:273.18px;width:184px;border-top:1px dotted #868686"></div>
<div class="abs dl" style="left:1040px;top:273.18px;width:143px;border-top:1px dotted #666"></div>
<div class="abs dl" style="left:27px;top:286.80px;width:829px;border-top:1px dotted #767676"></div>
<div class="abs dl" style="left:856px;top:286.80px;width:184px;border-top:1px dotted #868686"></div>
<div class="abs dl" style="left:1040px;top:286.80px;width:143px;border-top:1px dotted #666"></div>
<div class="abs dl" style="left:27px;top:300.42px;width:829px;border-top:1px dotted #767676"></div>
<div class="abs dl" style="left:856px;top:300.42px;width:184px;border-top:1px dotted #868686"></div>
<div class="abs dl" style="left:1040px;top:300.42px;width:143px;border-top:1px dotted #666"></div>
<div class="abs dl" style="left:27px;top:314.04px;width:829px;border-top:1px dotted #767676"></div>
<div class="abs dl" style="left:856px;top:314.04px;width:184px;border-top:1px dotted #868686"></div>
<div class="abs dl" style="left:1040px;top:314.04px;width:143px;border-top:1px dotted #666"></div>
<div class="abs dl" style="left:27px;top:327.66px;width:829px;border-top:1px dotted #767676"></div>
<div class="abs dl" style="left:856px;top:327.66px;width:184px;border-top:1px dotted #868686"></div>
<div class="abs dl" style="left:1040px;top:327.66px;width:143px;border-top:1px dotted #666"></div>
<div class="abs dl" style="left:27px;top:341.28px;width:829px;border-top:1px dotted #767676"></div>
<div class="abs dl" style="left:856px;top:341.28px;width:184px;border-top:1px dotted #868686"></div>
<div class="abs dl" style="left:1040px;top:341.28px;width:143px;border-top:1px dotted #666"></div>
<div class="abs dl" style="left:27px;top:354.90px;width:829px;border-top:1px dotted #767676"></div>
<div class="abs dl" style="left:856px;top:354.90px;width:184px;border-top:1px dotted #868686"></div>
<div class="abs dl" style="left:1040px;top:354.90px;width:143px;border-top:1px dotted #666"></div>
<div class="abs dl" style="left:27px;top:368.52px;width:829px;border-top:1px dotted #767676"></div>
<div class="abs dl" style="left:856px;top:368.52px;width:184px;border-top:1px dotted #868686"></div>
<div class="abs dl" style="left:1040px;top:368.52px;width:143px;border-top:1px dotted #666"></div>
<div class="abs dl" style="left:27px;top:382.14px;width:829px;border-top:1px dotted #767676"></div>
<div class="abs dl" style="left:856px;top:382.14px;width:184px;border-top:1px dotted #868686"></div>
<div class="abs dl" style="left:1040px;top:382.14px;width:143px;border-top:1px dotted #666"></div>
<div class="abs dl" style="left:27px;top:395.76px;width:829px;border-top:1px dotted #767676"></div>
<div class="abs dl" style="left:856px;top:395.76px;width:184px;border-top:1px dotted #868686"></div>
<div class="abs dl" style="left:1040px;top:395.76px;width:143px;border-top:1px dotted #666"></div>
<div class="abs dl" style="left:27px;top:409.38px;width:829px;border-top:1px dotted #767676"></div>
<div class="abs dl" style="left:856px;top:409.38px;width:184px;border-top:1px dotted #868686"></div>
<div class="abs dl" style="left:1040px;top:409.38px;width:143px;border-top:1px dotted #666"></div>
<div class="abs dl" style="left:27px;top:423.00px;width:829px;border-top:1px dotted #767676"></div>
<div class="abs dl" style="left:856px;top:423.00px;width:184px;border-top:1px dotted #868686"></div>
<div class="abs dl" style="left:1040px;top:423.00px;width:143px;border-top:1px dotted #666"></div>
<div class="abs dl" style="left:27px;top:436.62px;width:829px;border-top:1px dotted #767676"></div>
<div class="abs dl" style="left:856px;top:436.62px;width:184px;border-top:1px dotted #868686"></div>
<div class="abs dl" style="left:1040px;top:436.62px;width:143px;border-top:1px dotted #666"></div>
<div class="abs dl" style="left:27px;top:450.24px;width:829px;border-top:1px dotted #767676"></div>
<div class="abs dl" style="left:856px;top:450.24px;width:184px;border-top:1px dotted #868686"></div>
<div class="abs dl" style="left:1040px;top:450.24px;width:143px;border-top:1px dotted #666"></div>
<div class="abs dl" style="left:27px;top:463.86px;width:829px;border-top:1px dotted #767676"></div>
<div class="abs dl" style="left:856px;top:463.86px;width:184px;border-top:1px dotted #868686"></div>
<div class="abs dl" style="left:1040px;top:463.86px;width:143px;border-top:1px dotted #666"></div>
<div class="abs dl" style="left:27px;top:477.48px;width:829px;border-top:1px dotted #767676"></div>
<div class="abs dl" style="left:856px;top:477.48px;width:184px;border-top:1px dotted #868686"></div>
<div class="abs dl" style="left:1040px;top:477.48px;width:143px;border-top:1px dotted #666"></div>
<div class="abs dl" style="left:27px;top:491.10px;width:829px;border-top:1px dotted #767676"></div>
<div class="abs dl" style="left:856px;top:491.10px;width:184px;border-top:1px dotted #868686"></div>
<div class="abs dl" style="left:1040px;top:491.10px;width:143px;border-top:1px dotted #666"></div>
<div class="abs dl" style="left:27px;top:504.72px;width:829px;border-top:1px dotted #767676"></div>
<div class="abs dl" style="left:856px;top:504.72px;width:184px;border-top:1px dotted #868686"></div>
<div class="abs dl" style="left:1040px;top:504.72px;width:143px;border-top:1px dotted #666"></div>
<div class="abs dl" style="left:27px;top:518.34px;width:829px;border-top:1px dotted #767676"></div>
<div class="abs dl" style="left:856px;top:518.34px;width:184px;border-top:1px dotted #868686"></div>
<div class="abs dl" style="left:1040px;top:518.34px;width:143px;border-top:1px dotted #666"></div>
<div class="abs dl" style="left:27px;top:531.96px;width:829px;border-top:1px dotted #767676"></div>
<div class="abs dl" style="left:856px;top:531.96px;width:184px;border-top:1px dotted #868686"></div>
<div class="abs dl" style="left:1040px;top:531.96px;width:143px;border-top:1px dotted #666"></div>
<div class="abs" style="left:85.4px;top:219.3px;height:300.7px;border-left:1px dotted #767676"></div>
<div class="abs" style="left:144.4px;top:219.3px;height:300.7px;border-left:1px dotted #767676"></div>
<div class="abs" style="left:203.4px;top:219.3px;height:300.7px;border-left:1px dotted #767676"></div>
<div class="abs" style="left:263.4px;top:219.3px;height:300.7px;border-left:1px dotted #767676"></div>
<div class="abs" style="left:322.4px;top:219.3px;height:300.7px;border-left:1px dotted #767676"></div>
<div class="abs" style="left:381.4px;top:219.3px;height:300.7px;border-left:1px dotted #767676"></div>
<div class="abs" style="left:440.4px;top:219.3px;height:300.7px;border-left:1px dotted #767676"></div>
<div class="abs" style="left:499.4px;top:219.3px;height:300.7px;border-left:1px dotted #767676"></div>
<div class="abs" style="left:559.4px;top:219.3px;height:300.7px;border-left:1px dotted #767676"></div>
<div class="abs" style="left:618.4px;top:219.3px;height:300.7px;border-left:1px dotted #767676"></div>
<div class="abs" style="left:677.4px;top:219.3px;height:300.7px;border-left:1px dotted #767676"></div>
<div class="abs" style="left:736.4px;top:219.3px;height:300.7px;border-left:1px dotted #767676"></div>
<div class="abs" style="left:796.4px;top:219.3px;height:300.7px;border-left:1px dotted #767676"></div>
<div class="abs" style="left:855.4px;top:219.3px;height:300.7px;border-left:1px dotted #767676"></div>
<div class="abs" style="left:900.4px;top:219.3px;height:300.7px;border-left:1px dotted #868686"></div>
<div class="abs" style="left:938.4px;top:219.3px;height:300.7px;border-left:1px dotted #868686"></div>
<div class="abs" style="left:983.4px;top:219.3px;height:300.7px;border-left:1px dotted #868686"></div>
<div class="abs" style="left:1039.4px;top:219.3px;height:300.7px;border-left:1.2px solid #222"></div>
<div class="abs" style="left:1101.4px;top:219.3px;height:300.7px;border-left:1px dotted #666"></div>
<div class="abs" style="left:1149.4px;top:219.3px;height:300.7px;border-left:1px dotted #666"></div>
<div class="c" style="left:88px;top:222px;width:57px;text-align:left;">Fenster-007</div>
<div class="c" style="left:145px;top:222px;width:59px;text-align:center;">1</div>
<div class="c" style="left:204px;top:222px;width:60px;text-align:center;">1.21</div>
<div class="c" style="left:264px;top:222px;width:59px;text-align:center;">2.42</div>
<div class="c" style="left:323px;top:222px;width:59px;text-align:center;">BF</div>
<div class="c" style="left:384px;top:222px;width:57px;text-align:left;">AW 260 VS,</div>
<div class="c" style="left:443px;top:222px;width:57px;text-align:left;">NF1</div>
<div class="c" style="left:500px;top:222px;width:60px;text-align:center;">Nein</div>
<div class="c" style="left:560px;top:222px;width:59px;text-align:center;">Ja</div>
<div class="c" style="left:619px;top:222px;width:59px;text-align:center;">Nein</div>
<div class="c" style="left:678px;top:222px;width:59px;text-align:center;">Nein</div>
<div class="c" style="left:737px;top:222px;width:60px;text-align:center;">Nein</div>
<div class="c" style="left:797px;top:222px;width:59px;text-align:center;">Nein</div>
<div class="c" style="left:856px;top:222px;width:45px;text-align:center;">1'358.10</div>
<div class="c" style="left:901px;top:222px;width:36px;text-align:right;">0.00</div>
<div class="c" style="left:939px;top:222px;width:43px;text-align:right;">196.31</div>
<div class="c" style="left:984px;top:222px;width:56px;text-align:center;">0.00</div>
<div class="c" style="left:1040px;top:222px;width:62px;text-align:center;">2.93</div>
<div class="c" style="left:1102px;top:222px;width:48px;text-align:center;">1.21</div>
<div class="c" style="left:1150px;top:222px;width:45px;text-align:center;">4.84</div>
<div class="c" style="left:88px;top:236px;width:57px;text-align:left;">Fenster-008</div>
<div class="c" style="left:145px;top:236px;width:59px;text-align:center;">1</div>
<div class="c" style="left:204px;top:236px;width:60px;text-align:center;">1.8</div>
<div class="c" style="left:264px;top:236px;width:59px;text-align:center;">1.5</div>
<div class="c" style="left:323px;top:236px;width:59px;text-align:center;">BF</div>
<div class="c" style="left:384px;top:236px;width:57px;text-align:left;">AW 260 VS,</div>
<div class="c" style="left:443px;top:236px;width:57px;text-align:left;">NF1</div>
<div class="c" style="left:500px;top:236px;width:60px;text-align:center;">Nein</div>
<div class="c" style="left:560px;top:236px;width:59px;text-align:center;">Ja</div>
<div class="c" style="left:619px;top:236px;width:59px;text-align:center;">Nein</div>
<div class="c" style="left:678px;top:236px;width:59px;text-align:center;">Nein</div>
<div class="c" style="left:737px;top:236px;width:60px;text-align:center;">Nein</div>
<div class="c" style="left:797px;top:236px;width:59px;text-align:center;">Nein</div>
<div class="c" style="left:856px;top:236px;width:45px;text-align:center;">1'288.38</div>
<div class="c" style="left:901px;top:236px;width:36px;text-align:right;">0.00</div>
<div class="c" style="left:939px;top:236px;width:43px;text-align:right;">192.02</div>
<div class="c" style="left:984px;top:236px;width:56px;text-align:center;">0.00</div>
<div class="c" style="left:1040px;top:236px;width:62px;text-align:center;">2.70</div>
<div class="c" style="left:1102px;top:236px;width:48px;text-align:center;">1.80</div>
<div class="c" style="left:1150px;top:236px;width:45px;text-align:center;">3.00</div>
<div class="c" style="left:88px;top:250px;width:57px;text-align:left;">Fenster-009</div>
<div class="c" style="left:145px;top:250px;width:59px;text-align:center;">1</div>
<div class="c" style="left:204px;top:250px;width:60px;text-align:center;">1.1</div>
<div class="c" style="left:264px;top:250px;width:59px;text-align:center;">1.5</div>
<div class="c" style="left:323px;top:250px;width:59px;text-align:center;">BF</div>
<div class="c" style="left:384px;top:250px;width:57px;text-align:left;">AW 260 VS,</div>
<div class="c" style="left:443px;top:250px;width:57px;text-align:left;">NF1</div>
<div class="c" style="left:500px;top:250px;width:60px;text-align:center;">Nein</div>
<div class="c" style="left:560px;top:250px;width:59px;text-align:center;">Ja</div>
<div class="c" style="left:619px;top:250px;width:59px;text-align:center;">Nein</div>
<div class="c" style="left:678px;top:250px;width:59px;text-align:center;">Nein</div>
<div class="c" style="left:737px;top:250px;width:60px;text-align:center;">Nein</div>
<div class="c" style="left:797px;top:250px;width:59px;text-align:center;">Nein</div>
<div class="c" style="left:856px;top:250px;width:45px;text-align:center;">967.61</div>
<div class="c" style="left:901px;top:250px;width:36px;text-align:right;">0.00</div>
<div class="c" style="left:939px;top:250px;width:43px;text-align:right;">172.31</div>
<div class="c" style="left:984px;top:250px;width:56px;text-align:center;">0.00</div>
<div class="c" style="left:1040px;top:250px;width:62px;text-align:center;">1.65</div>
<div class="c" style="left:1102px;top:250px;width:48px;text-align:center;">1.10</div>
<div class="c" style="left:1150px;top:250px;width:45px;text-align:center;">3.00</div>
<div class="c" style="left:88px;top:263px;width:57px;text-align:left;">Fenster-010</div>
<div class="c" style="left:145px;top:263px;width:59px;text-align:center;">1</div>
<div class="c" style="left:204px;top:263px;width:60px;text-align:center;">1.1</div>
<div class="c" style="left:264px;top:263px;width:59px;text-align:center;">1.5</div>
<div class="c" style="left:323px;top:263px;width:59px;text-align:center;">BF</div>
<div class="c" style="left:384px;top:263px;width:57px;text-align:left;">AW 260 VS,</div>
<div class="c" style="left:443px;top:263px;width:57px;text-align:left;">NF1</div>
<div class="c" style="left:500px;top:263px;width:60px;text-align:center;">Nein</div>
<div class="c" style="left:560px;top:263px;width:59px;text-align:center;">Ja</div>
<div class="c" style="left:619px;top:263px;width:59px;text-align:center;">Nein</div>
<div class="c" style="left:678px;top:263px;width:59px;text-align:center;">Nein</div>
<div class="c" style="left:737px;top:263px;width:60px;text-align:center;">Nein</div>
<div class="c" style="left:797px;top:263px;width:59px;text-align:center;">Nein</div>
<div class="c" style="left:856px;top:263px;width:45px;text-align:center;">967.61</div>
<div class="c" style="left:901px;top:263px;width:36px;text-align:right;">0.00</div>
<div class="c" style="left:939px;top:263px;width:43px;text-align:right;">172.31</div>
<div class="c" style="left:984px;top:263px;width:56px;text-align:center;">0.00</div>
<div class="c" style="left:1040px;top:263px;width:62px;text-align:center;">1.65</div>
<div class="c" style="left:1102px;top:263px;width:48px;text-align:center;">1.10</div>
<div class="c" style="left:1150px;top:263px;width:45px;text-align:center;">3.00</div>
<div class="c" style="left:88px;top:277px;width:57px;text-align:left;">Fenster-011</div>
<div class="c" style="left:145px;top:277px;width:59px;text-align:center;">1</div>
<div class="c" style="left:204px;top:277px;width:60px;text-align:center;">1.1</div>
<div class="c" style="left:264px;top:277px;width:59px;text-align:center;">1.5</div>
<div class="c" style="left:323px;top:277px;width:59px;text-align:center;">BF</div>
<div class="c" style="left:384px;top:277px;width:57px;text-align:left;">AW 260 VS,</div>
<div class="c" style="left:443px;top:277px;width:57px;text-align:left;">NF1</div>
<div class="c" style="left:500px;top:277px;width:60px;text-align:center;">Nein</div>
<div class="c" style="left:560px;top:277px;width:59px;text-align:center;">Ja</div>
<div class="c" style="left:619px;top:277px;width:59px;text-align:center;">Nein</div>
<div class="c" style="left:678px;top:277px;width:59px;text-align:center;">Nein</div>
<div class="c" style="left:737px;top:277px;width:60px;text-align:center;">Nein</div>
<div class="c" style="left:797px;top:277px;width:59px;text-align:center;">Nein</div>
<div class="c" style="left:856px;top:277px;width:45px;text-align:center;">967.61</div>
<div class="c" style="left:901px;top:277px;width:36px;text-align:right;">0.00</div>
<div class="c" style="left:939px;top:277px;width:43px;text-align:right;">172.31</div>
<div class="c" style="left:984px;top:277px;width:56px;text-align:center;">0.00</div>
<div class="c" style="left:1040px;top:277px;width:62px;text-align:center;">1.65</div>
<div class="c" style="left:1102px;top:277px;width:48px;text-align:center;">1.10</div>
<div class="c" style="left:1150px;top:277px;width:45px;text-align:center;">3.00</div>
<div class="c" style="left:88px;top:291px;width:57px;text-align:left;">Fenster-011</div>
<div class="c" style="left:145px;top:291px;width:59px;text-align:center;">1</div>
<div class="c" style="left:204px;top:291px;width:60px;text-align:center;">5</div>
<div class="c" style="left:264px;top:291px;width:59px;text-align:center;">2.51</div>
<div class="c" style="left:323px;top:291px;width:59px;text-align:center;">BF</div>
<div class="c" style="left:384px;top:291px;width:57px;text-align:left;">AW 260 VS,</div>
<div class="c" style="left:443px;top:291px;width:57px;text-align:left;">NF1</div>
<div class="c" style="left:500px;top:291px;width:60px;text-align:center;">Nein</div>
<div class="c" style="left:560px;top:291px;width:59px;text-align:center;">Ja</div>
<div class="c" style="left:619px;top:291px;width:59px;text-align:center;">Nein</div>
<div class="c" style="left:678px;top:291px;width:59px;text-align:center;">Nein</div>
<div class="c" style="left:737px;top:291px;width:60px;text-align:center;">Nein</div>
<div class="c" style="left:797px;top:291px;width:59px;text-align:center;">Nein</div>
<div class="c" style="left:856px;top:291px;width:45px;text-align:center;">4'297.56</div>
<div class="c" style="left:901px;top:291px;width:36px;text-align:right;">0.00</div>
<div class="c" style="left:939px;top:291px;width:43px;text-align:right;">376.93</div>
<div class="c" style="left:984px;top:291px;width:56px;text-align:center;">0.00</div>
<div class="c" style="left:1040px;top:291px;width:62px;text-align:center;">12.55</div>
<div class="c" style="left:1102px;top:291px;width:48px;text-align:center;">5.00</div>
<div class="c" style="left:1150px;top:291px;width:45px;text-align:center;">5.02</div>
<div class="c" style="left:88px;top:304px;width:57px;text-align:left;">Fenster-012</div>
<div class="c" style="left:145px;top:304px;width:59px;text-align:center;">1</div>
<div class="c" style="left:204px;top:304px;width:60px;text-align:center;">1</div>
<div class="c" style="left:264px;top:304px;width:59px;text-align:center;">2.51</div>
<div class="c" style="left:323px;top:304px;width:59px;text-align:center;">BF</div>
<div class="c" style="left:384px;top:304px;width:57px;text-align:left;">AW 260 VS,</div>
<div class="c" style="left:443px;top:304px;width:57px;text-align:left;">NF1</div>
<div class="c" style="left:500px;top:304px;width:60px;text-align:center;">Nein</div>
<div class="c" style="left:560px;top:304px;width:59px;text-align:center;">Ja</div>
<div class="c" style="left:619px;top:304px;width:59px;text-align:center;">Nein</div>
<div class="c" style="left:678px;top:304px;width:59px;text-align:center;">Nein</div>
<div class="c" style="left:737px;top:304px;width:60px;text-align:center;">Nein</div>
<div class="c" style="left:797px;top:304px;width:59px;text-align:center;">Nein</div>
<div class="c" style="left:856px;top:304px;width:45px;text-align:center;">1'230.34</div>
<div class="c" style="left:901px;top:304px;width:36px;text-align:right;">0.00</div>
<div class="c" style="left:939px;top:304px;width:43px;text-align:right;">188.46</div>
<div class="c" style="left:984px;top:304px;width:56px;text-align:center;">0.00</div>
<div class="c" style="left:1040px;top:304px;width:62px;text-align:center;">2.51</div>
<div class="c" style="left:1102px;top:304px;width:48px;text-align:center;">1.00</div>
<div class="c" style="left:1150px;top:304px;width:45px;text-align:center;">5.02</div>
<div class="c" style="left:88px;top:318px;width:57px;text-align:left;">Fenster-013</div>
<div class="c" style="left:145px;top:318px;width:59px;text-align:center;">1</div>
<div class="c" style="left:204px;top:318px;width:60px;text-align:center;">0.8</div>
<div class="c" style="left:264px;top:318px;width:59px;text-align:center;">1.51</div>
<div class="c" style="left:323px;top:318px;width:59px;text-align:center;">BF</div>
<div class="c" style="left:384px;top:318px;width:57px;text-align:left;">AW 260 VS,</div>
<div class="c" style="left:443px;top:318px;width:57px;text-align:left;">NF1</div>
<div class="c" style="left:500px;top:318px;width:60px;text-align:center;">Nein</div>
<div class="c" style="left:560px;top:318px;width:59px;text-align:center;">Ja</div>
<div class="c" style="left:619px;top:318px;width:59px;text-align:center;">Nein</div>
<div class="c" style="left:678px;top:318px;width:59px;text-align:center;">Nein</div>
<div class="c" style="left:737px;top:318px;width:60px;text-align:center;">Nein</div>
<div class="c" style="left:797px;top:318px;width:59px;text-align:center;">Nein</div>
<div class="c" style="left:856px;top:318px;width:45px;text-align:center;">832.57</div>
<div class="c" style="left:901px;top:318px;width:36px;text-align:right;">0.00</div>
<div class="c" style="left:939px;top:318px;width:43px;text-align:right;">164.02</div>
<div class="c" style="left:984px;top:318px;width:56px;text-align:center;">0.00</div>
<div class="c" style="left:1040px;top:318px;width:62px;text-align:center;">1.21</div>
<div class="c" style="left:1102px;top:318px;width:48px;text-align:center;">0.80</div>
<div class="c" style="left:1150px;top:318px;width:45px;text-align:center;">3.02</div>
<div class="c" style="left:88px;top:331px;width:57px;text-align:left;">Fenster-014</div>
<div class="c" style="left:145px;top:331px;width:59px;text-align:center;">1</div>
<div class="c" style="left:204px;top:331px;width:60px;text-align:center;">0.93</div>
<div class="c" style="left:264px;top:331px;width:59px;text-align:center;">2.69</div>
<div class="c" style="left:323px;top:331px;width:59px;text-align:center;">BF</div>
<div class="c" style="left:384px;top:331px;width:57px;text-align:left;">AW 260 VS,</div>
<div class="c" style="left:443px;top:331px;width:57px;text-align:left;">NF1</div>
<div class="c" style="left:500px;top:331px;width:60px;text-align:center;">Nein</div>
<div class="c" style="left:560px;top:331px;width:59px;text-align:center;">Ja</div>
<div class="c" style="left:619px;top:331px;width:59px;text-align:center;">Nein</div>
<div class="c" style="left:678px;top:331px;width:59px;text-align:center;">Nein</div>
<div class="c" style="left:737px;top:331px;width:60px;text-align:center;">Nein</div>
<div class="c" style="left:797px;top:331px;width:59px;text-align:center;">Nein</div>
<div class="c" style="left:856px;top:331px;width:45px;text-align:center;">1'227.80</div>
<div class="c" style="left:901px;top:331px;width:36px;text-align:right;">0.00</div>
<div class="c" style="left:939px;top:331px;width:43px;text-align:right;">188.30</div>
<div class="c" style="left:984px;top:331px;width:56px;text-align:center;">0.00</div>
<div class="c" style="left:1040px;top:331px;width:62px;text-align:center;">2.50</div>
<div class="c" style="left:1102px;top:331px;width:48px;text-align:center;">0.93</div>
<div class="c" style="left:1150px;top:331px;width:45px;text-align:center;">5.38</div>
<div class="c" style="left:88px;top:345px;width:57px;text-align:left;">Fenster-015</div>
<div class="c" style="left:145px;top:345px;width:59px;text-align:center;">1</div>
<div class="c" style="left:204px;top:345px;width:60px;text-align:center;">0.93</div>
<div class="c" style="left:264px;top:345px;width:59px;text-align:center;">5.485</div>
<div class="c" style="left:323px;top:345px;width:59px;text-align:center;">BF</div>
<div class="c" style="left:384px;top:345px;width:57px;text-align:left;">AW 260 VS,</div>
<div class="c" style="left:443px;top:345px;width:57px;text-align:left;">NF1</div>
<div class="c" style="left:500px;top:345px;width:60px;text-align:center;">Nein</div>
<div class="c" style="left:560px;top:345px;width:59px;text-align:center;">Ja</div>
<div class="c" style="left:619px;top:345px;width:59px;text-align:center;">Nein</div>
<div class="c" style="left:678px;top:345px;width:59px;text-align:center;">Nein</div>
<div class="c" style="left:737px;top:345px;width:60px;text-align:center;">Nein</div>
<div class="c" style="left:797px;top:345px;width:59px;text-align:center;">Nein</div>
<div class="c" style="left:856px;top:345px;width:45px;text-align:center;">2'021.90</div>
<div class="c" style="left:901px;top:345px;width:36px;text-align:right;">0.00</div>
<div class="c" style="left:939px;top:345px;width:43px;text-align:right;">237.10</div>
<div class="c" style="left:984px;top:345px;width:56px;text-align:center;">0.00</div>
<div class="c" style="left:1040px;top:345px;width:62px;text-align:center;">5.10</div>
<div class="c" style="left:1102px;top:345px;width:48px;text-align:center;">0.93</div>
<div class="c" style="left:1150px;top:345px;width:45px;text-align:center;">10.97</div>
<div class="c" style="left:88px;top:359px;width:57px;text-align:left;">Fenster-016</div>
<div class="c" style="left:145px;top:359px;width:59px;text-align:center;">1</div>
<div class="c" style="left:204px;top:359px;width:60px;text-align:center;">0.93</div>
<div class="c" style="left:264px;top:359px;width:59px;text-align:center;">2.69</div>
<div class="c" style="left:323px;top:359px;width:59px;text-align:center;">BF</div>
<div class="c" style="left:384px;top:359px;width:57px;text-align:left;">AW 260 VS,</div>
<div class="c" style="left:443px;top:359px;width:57px;text-align:left;">NF1</div>
<div class="c" style="left:500px;top:359px;width:60px;text-align:center;">Nein</div>
<div class="c" style="left:560px;top:359px;width:59px;text-align:center;">Ja</div>
<div class="c" style="left:619px;top:359px;width:59px;text-align:center;">Nein</div>
<div class="c" style="left:678px;top:359px;width:59px;text-align:center;">Nein</div>
<div class="c" style="left:737px;top:359px;width:60px;text-align:center;">Nein</div>
<div class="c" style="left:797px;top:359px;width:59px;text-align:center;">Nein</div>
<div class="c" style="left:856px;top:359px;width:45px;text-align:center;">1'227.80</div>
<div class="c" style="left:901px;top:359px;width:36px;text-align:right;">0.00</div>
<div class="c" style="left:939px;top:359px;width:43px;text-align:right;">188.30</div>
<div class="c" style="left:984px;top:359px;width:56px;text-align:center;">0.00</div>
<div class="c" style="left:1040px;top:359px;width:62px;text-align:center;">2.50</div>
<div class="c" style="left:1102px;top:359px;width:48px;text-align:center;">0.93</div>
<div class="c" style="left:1150px;top:359px;width:45px;text-align:center;">5.38</div>
<div class="c" style="left:88px;top:372px;width:57px;text-align:left;">Fenster-017</div>
<div class="c" style="left:145px;top:372px;width:59px;text-align:center;">1</div>
<div class="c" style="left:204px;top:372px;width:60px;text-align:center;">0.93</div>
<div class="c" style="left:264px;top:372px;width:59px;text-align:center;">5.125</div>
<div class="c" style="left:323px;top:372px;width:59px;text-align:center;">BF</div>
<div class="c" style="left:384px;top:372px;width:57px;text-align:left;">AW 260 VS,</div>
<div class="c" style="left:443px;top:372px;width:57px;text-align:left;">NF1</div>
<div class="c" style="left:500px;top:372px;width:60px;text-align:center;">Nein</div>
<div class="c" style="left:560px;top:372px;width:59px;text-align:center;">Ja</div>
<div class="c" style="left:619px;top:372px;width:59px;text-align:center;">Nein</div>
<div class="c" style="left:678px;top:372px;width:59px;text-align:center;">Nein</div>
<div class="c" style="left:737px;top:372px;width:60px;text-align:center;">Nein</div>
<div class="c" style="left:797px;top:372px;width:59px;text-align:center;">Nein</div>
<div class="c" style="left:856px;top:372px;width:45px;text-align:center;">1'919.62</div>
<div class="c" style="left:901px;top:372px;width:36px;text-align:right;">0.00</div>
<div class="c" style="left:939px;top:372px;width:43px;text-align:right;">230.81</div>
<div class="c" style="left:984px;top:372px;width:56px;text-align:center;">0.00</div>
<div class="c" style="left:1040px;top:372px;width:62px;text-align:center;">4.77</div>
<div class="c" style="left:1102px;top:372px;width:48px;text-align:center;">0.93</div>
<div class="c" style="left:1150px;top:372px;width:45px;text-align:center;">10.25</div>
<div class="c" style="left:856px;top:386px;width:45px;text-align:center;">0.00</div>
<div class="c" style="left:901px;top:386px;width:36px;text-align:right;">0.00</div>
<div class="c" style="left:939px;top:386px;width:43px;text-align:right;">0.00</div>
<div class="c" style="left:984px;top:386px;width:56px;text-align:center;">0.00</div>
<div class="c" style="left:1040px;top:386px;width:62px;text-align:center;">0.00</div>
<div class="c" style="left:1102px;top:386px;width:48px;text-align:center;">0.00</div>
<div class="c" style="left:1150px;top:386px;width:45px;text-align:center;">0.00</div>
<div class="c" style="left:856px;top:399px;width:45px;text-align:center;">0.00</div>
<div class="c" style="left:901px;top:399px;width:36px;text-align:right;">0.00</div>
<div class="c" style="left:939px;top:399px;width:43px;text-align:right;">0.00</div>
<div class="c" style="left:984px;top:399px;width:56px;text-align:center;">0.00</div>
<div class="c" style="left:1040px;top:399px;width:62px;text-align:center;">0.00</div>
<div class="c" style="left:1102px;top:399px;width:48px;text-align:center;">0.00</div>
<div class="c" style="left:1150px;top:399px;width:45px;text-align:center;">0.00</div>
<div class="c" style="left:856px;top:413px;width:45px;text-align:center;">0.00</div>
<div class="c" style="left:901px;top:413px;width:36px;text-align:right;">0.00</div>
<div class="c" style="left:939px;top:413px;width:43px;text-align:right;">0.00</div>
<div class="c" style="left:984px;top:413px;width:56px;text-align:center;">0.00</div>
<div class="c" style="left:1040px;top:413px;width:62px;text-align:center;">0.00</div>
<div class="c" style="left:1102px;top:413px;width:48px;text-align:center;">0.00</div>
<div class="c" style="left:1150px;top:413px;width:45px;text-align:center;">0.00</div>
<div class="c" style="left:856px;top:427px;width:45px;text-align:center;">0.00</div>
<div class="c" style="left:901px;top:427px;width:36px;text-align:right;">0.00</div>
<div class="c" style="left:939px;top:427px;width:43px;text-align:right;">0.00</div>
<div class="c" style="left:984px;top:427px;width:56px;text-align:center;">0.00</div>
<div class="c" style="left:1040px;top:427px;width:62px;text-align:center;">0.00</div>
<div class="c" style="left:1102px;top:427px;width:48px;text-align:center;">0.00</div>
<div class="c" style="left:1150px;top:427px;width:45px;text-align:center;">0.00</div>
<div class="c" style="left:856px;top:440px;width:45px;text-align:center;">0.00</div>
<div class="c" style="left:901px;top:440px;width:36px;text-align:right;">0.00</div>
<div class="c" style="left:939px;top:440px;width:43px;text-align:right;">0.00</div>
<div class="c" style="left:984px;top:440px;width:56px;text-align:center;">0.00</div>
<div class="c" style="left:1040px;top:440px;width:62px;text-align:center;">0.00</div>
<div class="c" style="left:1102px;top:440px;width:48px;text-align:center;">0.00</div>
<div class="c" style="left:1150px;top:440px;width:45px;text-align:center;">0.00</div>
<div class="c" style="left:856px;top:454px;width:45px;text-align:center;">0.00</div>
<div class="c" style="left:901px;top:454px;width:36px;text-align:right;">0.00</div>
<div class="c" style="left:939px;top:454px;width:43px;text-align:right;">0.00</div>
<div class="c" style="left:984px;top:454px;width:56px;text-align:center;">0.00</div>
<div class="c" style="left:1040px;top:454px;width:62px;text-align:center;">0.00</div>
<div class="c" style="left:1102px;top:454px;width:48px;text-align:center;">0.00</div>
<div class="c" style="left:1150px;top:454px;width:45px;text-align:center;">0.00</div>
<div class="c" style="left:856px;top:468px;width:45px;text-align:center;">0.00</div>
<div class="c" style="left:901px;top:468px;width:36px;text-align:right;">0.00</div>
<div class="c" style="left:939px;top:468px;width:43px;text-align:right;">0.00</div>
<div class="c" style="left:984px;top:468px;width:56px;text-align:center;">0.00</div>
<div class="c" style="left:1040px;top:468px;width:62px;text-align:center;">0.00</div>
<div class="c" style="left:1102px;top:468px;width:48px;text-align:center;">0.00</div>
<div class="c" style="left:1150px;top:468px;width:45px;text-align:center;">0.00</div>
<div class="c" style="left:856px;top:481px;width:45px;text-align:center;">0.00</div>
<div class="c" style="left:901px;top:481px;width:36px;text-align:right;">0.00</div>
<div class="c" style="left:939px;top:481px;width:43px;text-align:right;">0.00</div>
<div class="c" style="left:984px;top:481px;width:56px;text-align:center;">0.00</div>
<div class="c" style="left:1040px;top:481px;width:62px;text-align:center;">0.00</div>
<div class="c" style="left:1102px;top:481px;width:48px;text-align:center;">0.00</div>
<div class="c" style="left:1150px;top:481px;width:45px;text-align:center;">0.00</div>
<div class="c" style="left:856px;top:495px;width:45px;text-align:center;">0.00</div>
<div class="c" style="left:901px;top:495px;width:36px;text-align:right;">0.00</div>
<div class="c" style="left:939px;top:495px;width:43px;text-align:right;">0.00</div>
<div class="c" style="left:984px;top:495px;width:56px;text-align:center;">0.00</div>
<div class="c" style="left:1040px;top:495px;width:62px;text-align:center;">0.00</div>
<div class="c" style="left:1102px;top:495px;width:48px;text-align:center;">0.00</div>
<div class="c" style="left:1150px;top:495px;width:45px;text-align:center;">0.00</div>
<div class="c" style="left:856px;top:508px;width:45px;text-align:center;">0.00</div>
<div class="c" style="left:901px;top:508px;width:36px;text-align:right;">0.00</div>
<div class="c" style="left:939px;top:508px;width:43px;text-align:right;">0.00</div>
<div class="c" style="left:984px;top:508px;width:56px;text-align:center;">0.00</div>
<div class="c" style="left:1040px;top:508px;width:62px;text-align:center;">0.00</div>
<div class="c" style="left:1102px;top:508px;width:48px;text-align:center;">0.00</div>
<div class="c" style="left:1150px;top:508px;width:45px;text-align:center;">0.00</div>
<svg class="abs" style="left:856.5px;top:219.60px" width="6" height="6"><polygon points="0,0 5.5,0 0,5.5" fill="#1c7f38"/></svg>
<svg class="abs" style="left:901.5px;top:219.60px" width="6" height="6"><polygon points="0,0 5.5,0 0,5.5" fill="#1c7f38"/></svg>
<svg class="abs" style="left:939.5px;top:219.60px" width="6" height="6"><polygon points="0,0 5.5,0 0,5.5" fill="#1c7f38"/></svg>
<svg class="abs" style="left:984.5px;top:219.60px" width="6" height="6"><polygon points="0,0 5.5,0 0,5.5" fill="#1c7f38"/></svg>
<svg class="abs" style="left:856.5px;top:233.22px" width="6" height="6"><polygon points="0,0 5.5,0 0,5.5" fill="#1c7f38"/></svg>
<svg class="abs" style="left:901.5px;top:233.22px" width="6" height="6"><polygon points="0,0 5.5,0 0,5.5" fill="#1c7f38"/></svg>
<svg class="abs" style="left:939.5px;top:233.22px" width="6" height="6"><polygon points="0,0 5.5,0 0,5.5" fill="#1c7f38"/></svg>
<svg class="abs" style="left:984.5px;top:233.22px" width="6" height="6"><polygon points="0,0 5.5,0 0,5.5" fill="#1c7f38"/></svg>
<svg class="abs" style="left:856.5px;top:246.84px" width="6" height="6"><polygon points="0,0 5.5,0 0,5.5" fill="#1c7f38"/></svg>
<svg class="abs" style="left:901.5px;top:246.84px" width="6" height="6"><polygon points="0,0 5.5,0 0,5.5" fill="#1c7f38"/></svg>
<svg class="abs" style="left:939.5px;top:246.84px" width="6" height="6"><polygon points="0,0 5.5,0 0,5.5" fill="#1c7f38"/></svg>
<svg class="abs" style="left:984.5px;top:246.84px" width="6" height="6"><polygon points="0,0 5.5,0 0,5.5" fill="#1c7f38"/></svg>
<svg class="abs" style="left:856.5px;top:260.46px" width="6" height="6"><polygon points="0,0 5.5,0 0,5.5" fill="#1c7f38"/></svg>
<svg class="abs" style="left:901.5px;top:260.46px" width="6" height="6"><polygon points="0,0 5.5,0 0,5.5" fill="#1c7f38"/></svg>
<svg class="abs" style="left:939.5px;top:260.46px" width="6" height="6"><polygon points="0,0 5.5,0 0,5.5" fill="#1c7f38"/></svg>
<svg class="abs" style="left:984.5px;top:260.46px" width="6" height="6"><polygon points="0,0 5.5,0 0,5.5" fill="#1c7f38"/></svg>
<svg class="abs" style="left:856.5px;top:274.08px" width="6" height="6"><polygon points="0,0 5.5,0 0,5.5" fill="#1c7f38"/></svg>
<svg class="abs" style="left:901.5px;top:274.08px" width="6" height="6"><polygon points="0,0 5.5,0 0,5.5" fill="#1c7f38"/></svg>
<svg class="abs" style="left:939.5px;top:274.08px" width="6" height="6"><polygon points="0,0 5.5,0 0,5.5" fill="#1c7f38"/></svg>
<svg class="abs" style="left:984.5px;top:274.08px" width="6" height="6"><polygon points="0,0 5.5,0 0,5.5" fill="#1c7f38"/></svg>
<svg class="abs" style="left:856.5px;top:287.70px" width="6" height="6"><polygon points="0,0 5.5,0 0,5.5" fill="#1c7f38"/></svg>
<svg class="abs" style="left:901.5px;top:287.70px" width="6" height="6"><polygon points="0,0 5.5,0 0,5.5" fill="#1c7f38"/></svg>
<svg class="abs" style="left:939.5px;top:287.70px" width="6" height="6"><polygon points="0,0 5.5,0 0,5.5" fill="#1c7f38"/></svg>
<svg class="abs" style="left:984.5px;top:287.70px" width="6" height="6"><polygon points="0,0 5.5,0 0,5.5" fill="#1c7f38"/></svg>
<svg class="abs" style="left:856.5px;top:301.32px" width="6" height="6"><polygon points="0,0 5.5,0 0,5.5" fill="#1c7f38"/></svg>
<svg class="abs" style="left:901.5px;top:301.32px" width="6" height="6"><polygon points="0,0 5.5,0 0,5.5" fill="#1c7f38"/></svg>
<svg class="abs" style="left:939.5px;top:301.32px" width="6" height="6"><polygon points="0,0 5.5,0 0,5.5" fill="#1c7f38"/></svg>
<svg class="abs" style="left:984.5px;top:301.32px" width="6" height="6"><polygon points="0,0 5.5,0 0,5.5" fill="#1c7f38"/></svg>
<svg class="abs" style="left:856.5px;top:314.94px" width="6" height="6"><polygon points="0,0 5.5,0 0,5.5" fill="#1c7f38"/></svg>
<svg class="abs" style="left:901.5px;top:314.94px" width="6" height="6"><polygon points="0,0 5.5,0 0,5.5" fill="#1c7f38"/></svg>
<svg class="abs" style="left:939.5px;top:314.94px" width="6" height="6"><polygon points="0,0 5.5,0 0,5.5" fill="#1c7f38"/></svg>
<svg class="abs" style="left:984.5px;top:314.94px" width="6" height="6"><polygon points="0,0 5.5,0 0,5.5" fill="#1c7f38"/></svg>
<svg class="abs" style="left:856.5px;top:328.56px" width="6" height="6"><polygon points="0,0 5.5,0 0,5.5" fill="#1c7f38"/></svg>
<svg class="abs" style="left:901.5px;top:328.56px" width="6" height="6"><polygon points="0,0 5.5,0 0,5.5" fill="#1c7f38"/></svg>
<svg class="abs" style="left:939.5px;top:328.56px" width="6" height="6"><polygon points="0,0 5.5,0 0,5.5" fill="#1c7f38"/></svg>
<svg class="abs" style="left:984.5px;top:328.56px" width="6" height="6"><polygon points="0,0 5.5,0 0,5.5" fill="#1c7f38"/></svg>
<svg class="abs" style="left:856.5px;top:342.18px" width="6" height="6"><polygon points="0,0 5.5,0 0,5.5" fill="#1c7f38"/></svg>
<svg class="abs" style="left:901.5px;top:342.18px" width="6" height="6"><polygon points="0,0 5.5,0 0,5.5" fill="#1c7f38"/></svg>
<svg class="abs" style="left:939.5px;top:342.18px" width="6" height="6"><polygon points="0,0 5.5,0 0,5.5" fill="#1c7f38"/></svg>
<svg class="abs" style="left:984.5px;top:342.18px" width="6" height="6"><polygon points="0,0 5.5,0 0,5.5" fill="#1c7f38"/></svg>
<svg class="abs" style="left:856.5px;top:355.80px" width="6" height="6"><polygon points="0,0 5.5,0 0,5.5" fill="#1c7f38"/></svg>
<svg class="abs" style="left:901.5px;top:355.80px" width="6" height="6"><polygon points="0,0 5.5,0 0,5.5" fill="#1c7f38"/></svg>
<svg class="abs" style="left:939.5px;top:355.80px" width="6" height="6"><polygon points="0,0 5.5,0 0,5.5" fill="#1c7f38"/></svg>
<svg class="abs" style="left:984.5px;top:355.80px" width="6" height="6"><polygon points="0,0 5.5,0 0,5.5" fill="#1c7f38"/></svg>
<svg class="abs" style="left:856.5px;top:369.42px" width="6" height="6"><polygon points="0,0 5.5,0 0,5.5" fill="#1c7f38"/></svg>
<svg class="abs" style="left:901.5px;top:369.42px" width="6" height="6"><polygon points="0,0 5.5,0 0,5.5" fill="#1c7f38"/></svg>
<svg class="abs" style="left:939.5px;top:369.42px" width="6" height="6"><polygon points="0,0 5.5,0 0,5.5" fill="#1c7f38"/></svg>
<svg class="abs" style="left:984.5px;top:369.42px" width="6" height="6"><polygon points="0,0 5.5,0 0,5.5" fill="#1c7f38"/></svg>
<svg class="abs" style="left:856.5px;top:383.04px" width="6" height="6"><polygon points="0,0 5.5,0 0,5.5" fill="#1c7f38"/></svg>
<svg class="abs" style="left:901.5px;top:383.04px" width="6" height="6"><polygon points="0,0 5.5,0 0,5.5" fill="#1c7f38"/></svg>
<svg class="abs" style="left:939.5px;top:383.04px" width="6" height="6"><polygon points="0,0 5.5,0 0,5.5" fill="#1c7f38"/></svg>
<svg class="abs" style="left:984.5px;top:383.04px" width="6" height="6"><polygon points="0,0 5.5,0 0,5.5" fill="#1c7f38"/></svg>
<svg class="abs" style="left:856.5px;top:396.66px" width="6" height="6"><polygon points="0,0 5.5,0 0,5.5" fill="#1c7f38"/></svg>
<svg class="abs" style="left:901.5px;top:396.66px" width="6" height="6"><polygon points="0,0 5.5,0 0,5.5" fill="#1c7f38"/></svg>
<svg class="abs" style="left:939.5px;top:396.66px" width="6" height="6"><polygon points="0,0 5.5,0 0,5.5" fill="#1c7f38"/></svg>
<svg class="abs" style="left:984.5px;top:396.66px" width="6" height="6"><polygon points="0,0 5.5,0 0,5.5" fill="#1c7f38"/></svg>
<svg class="abs" style="left:856.5px;top:410.28px" width="6" height="6"><polygon points="0,0 5.5,0 0,5.5" fill="#1c7f38"/></svg>
<svg class="abs" style="left:901.5px;top:410.28px" width="6" height="6"><polygon points="0,0 5.5,0 0,5.5" fill="#1c7f38"/></svg>
<svg class="abs" style="left:939.5px;top:410.28px" width="6" height="6"><polygon points="0,0 5.5,0 0,5.5" fill="#1c7f38"/></svg>
<svg class="abs" style="left:984.5px;top:410.28px" width="6" height="6"><polygon points="0,0 5.5,0 0,5.5" fill="#1c7f38"/></svg>
<svg class="abs" style="left:856.5px;top:423.90px" width="6" height="6"><polygon points="0,0 5.5,0 0,5.5" fill="#1c7f38"/></svg>
<svg class="abs" style="left:901.5px;top:423.90px" width="6" height="6"><polygon points="0,0 5.5,0 0,5.5" fill="#1c7f38"/></svg>
<svg class="abs" style="left:939.5px;top:423.90px" width="6" height="6"><polygon points="0,0 5.5,0 0,5.5" fill="#1c7f38"/></svg>
<svg class="abs" style="left:984.5px;top:423.90px" width="6" height="6"><polygon points="0,0 5.5,0 0,5.5" fill="#1c7f38"/></svg>
<svg class="abs" style="left:856.5px;top:437.52px" width="6" height="6"><polygon points="0,0 5.5,0 0,5.5" fill="#1c7f38"/></svg>
<svg class="abs" style="left:901.5px;top:437.52px" width="6" height="6"><polygon points="0,0 5.5,0 0,5.5" fill="#1c7f38"/></svg>
<svg class="abs" style="left:939.5px;top:437.52px" width="6" height="6"><polygon points="0,0 5.5,0 0,5.5" fill="#1c7f38"/></svg>
<svg class="abs" style="left:984.5px;top:437.52px" width="6" height="6"><polygon points="0,0 5.5,0 0,5.5" fill="#1c7f38"/></svg>
<svg class="abs" style="left:856.5px;top:451.14px" width="6" height="6"><polygon points="0,0 5.5,0 0,5.5" fill="#1c7f38"/></svg>
<svg class="abs" style="left:901.5px;top:451.14px" width="6" height="6"><polygon points="0,0 5.5,0 0,5.5" fill="#1c7f38"/></svg>
<svg class="abs" style="left:939.5px;top:451.14px" width="6" height="6"><polygon points="0,0 5.5,0 0,5.5" fill="#1c7f38"/></svg>
<svg class="abs" style="left:984.5px;top:451.14px" width="6" height="6"><polygon points="0,0 5.5,0 0,5.5" fill="#1c7f38"/></svg>
<svg class="abs" style="left:856.5px;top:464.76px" width="6" height="6"><polygon points="0,0 5.5,0 0,5.5" fill="#1c7f38"/></svg>
<svg class="abs" style="left:901.5px;top:464.76px" width="6" height="6"><polygon points="0,0 5.5,0 0,5.5" fill="#1c7f38"/></svg>
<svg class="abs" style="left:939.5px;top:464.76px" width="6" height="6"><polygon points="0,0 5.5,0 0,5.5" fill="#1c7f38"/></svg>
<svg class="abs" style="left:984.5px;top:464.76px" width="6" height="6"><polygon points="0,0 5.5,0 0,5.5" fill="#1c7f38"/></svg>
<svg class="abs" style="left:856.5px;top:478.38px" width="6" height="6"><polygon points="0,0 5.5,0 0,5.5" fill="#1c7f38"/></svg>
<svg class="abs" style="left:901.5px;top:478.38px" width="6" height="6"><polygon points="0,0 5.5,0 0,5.5" fill="#1c7f38"/></svg>
<svg class="abs" style="left:939.5px;top:478.38px" width="6" height="6"><polygon points="0,0 5.5,0 0,5.5" fill="#1c7f38"/></svg>
<svg class="abs" style="left:984.5px;top:478.38px" width="6" height="6"><polygon points="0,0 5.5,0 0,5.5" fill="#1c7f38"/></svg>
<svg class="abs" style="left:856.5px;top:492.00px" width="6" height="6"><polygon points="0,0 5.5,0 0,5.5" fill="#1c7f38"/></svg>
<svg class="abs" style="left:901.5px;top:492.00px" width="6" height="6"><polygon points="0,0 5.5,0 0,5.5" fill="#1c7f38"/></svg>
<svg class="abs" style="left:939.5px;top:492.00px" width="6" height="6"><polygon points="0,0 5.5,0 0,5.5" fill="#1c7f38"/></svg>
<svg class="abs" style="left:984.5px;top:492.00px" width="6" height="6"><polygon points="0,0 5.5,0 0,5.5" fill="#1c7f38"/></svg>
<svg class="abs" style="left:856.5px;top:505.62px" width="6" height="6"><polygon points="0,0 5.5,0 0,5.5" fill="#1c7f38"/></svg>
<svg class="abs" style="left:901.5px;top:505.62px" width="6" height="6"><polygon points="0,0 5.5,0 0,5.5" fill="#1c7f38"/></svg>
<svg class="abs" style="left:939.5px;top:505.62px" width="6" height="6"><polygon points="0,0 5.5,0 0,5.5" fill="#1c7f38"/></svg>
<svg class="abs" style="left:984.5px;top:505.62px" width="6" height="6"><polygon points="0,0 5.5,0 0,5.5" fill="#1c7f38"/></svg>
<div class="c" style="left:856px;top:209px;width:45px;color:#fff">CHF</div>
<div class="c" style="left:901px;top:209px;width:38px;color:#fff">CHF</div>
<div class="c" style="left:939px;top:209px;width:45px;color:#fff">CHF</div>
<div class="c" style="left:984px;top:209px;width:56px;color:#fff">CHF</div>
<div class="c" style="left:1040px;top:209px;width:62px;color:#fff">41.72 m2</div>
<div class="c" style="left:1102px;top:209px;width:48px;color:#fff">16.8 m</div>
<div class="c" style="left:1150px;top:209px;width:45px;color:#fff">61.9 m</div>
<div class="hb" style="left:160.5px;top:207px;line-height:1;font-size:10.8px;color:#ddd">12 Stk.</div>
<div class="hb" style="left:323px;top:22.5px;width:236px;font-size:18.9px;line-height:20px">Eingabefelder</div>
<div class="hb" style="left:856px;top:28.5px;width:184px;font-size:10.6px;line-height:13px">Einheitspreise in CHF pro Fenster</div>
<div class="hb" style="left:1068px;top:28.5px;text-align:left;font-size:10.7px;line-height:13px">Informationen f&uuml;r alle F</div>
<div class="hb" style="left:30.5px;top:175.5px;text-align:left">Geschoss</div>
<div class="hb" style="left:88.5px;top:175.5px;text-align:left">Pos.</div>
<div class="hb" style="left:147.5px;top:175.5px;text-align:left">Anz.</div>
<div class="hb" style="left:325px;top:175.5px;text-align:left">Fenstertyp</div>
<div class="hb" style="left:384px;top:175.5px;text-align:left">Wandtyp</div>
<div class="hb" style="left:443.5px;top:175.5px;text-align:left">Fensterart</div>
<div class="hb" style="left:204px;top:148px;width:60px">Breite<br>LM<br>()</div>
<div class="hb" style="left:264px;top:148px;width:59px">H&ouml;he<br>LM<br>()</div>
<div class="vt" style="left:544.3px;top:187.2px">Montage 4B</div>
<div class="vt" style="left:603.0px;top:187.2px">Eigenmontage</div>
<div class="vt" style="left:663.0px;top:187.2px">Schallschutzglas</div>
<div class="vt" style="left:701.5px;top:187.2px">Sicherheitsglas</div>
<div class="vt" style="left:781.0px;top:187.2px">W&auml;rmeschutzglas</div>
<div class="vt" style="left:840.0px;top:187.2px">Sicherheitspaket</div>
<div class="vt" style="left:872.0px;top:187.2px">Basiskosten</div>
<div class="vt" style="left:923.0px;top:187.2px">Kosten Montage 4B</div>
<div class="vt" style="left:968.5px;top:187.2px">Kosten Eigenmontage</div>
<div class="vt" style="left:1005.5px;top:187.2px">Kosten f&uuml;r Zuschl&auml;ge</div>
<div class="vt" style="left:1065.0px;top:187.2px">Abzugsfl&auml;che (m2)</div>
<div class="vt" style="left:1119.0px;top:187.2px">Fensterbank (m)</div>
<div class="vt" style="left:1167.0px;top:187.2px">Leibung (m)</div>
<svg class="abs" style="left:897px;top:43.5px" width="4" height="4"><polygon points="0,0 4,0 4,4" fill="#e8202a"/></svg>
<svg class="abs" style="left:980px;top:43.5px" width="4" height="4"><polygon points="0,0 4,0 4,4" fill="#e8202a"/></svg>
<svg class="abs" style="left:1036px;top:43.5px" width="4" height="4"><polygon points="0,0 4,0 4,4" fill="#e8202a"/></svg>
<svg class="abs" style="left:1098px;top:43.5px" width="4" height="4"><polygon points="0,0 4,0 4,4" fill="#e8202a"/></svg>
<svg class="abs" style="left:1146px;top:43.5px" width="4" height="4"><polygon points="0,0 4,0 4,4" fill="#e8202a"/></svg>
<svg class="abs" style="left:377.5px;top:219.8px" width="4.5" height="4.5"><polygon points="0,0 4.5,0 4.5,4.5" fill="#e8202a"/></svg>
<div class="abs" style="left:67px;top:208px;width:789px;height:190px;border:7px solid #3f70a5"></div>
<div class="abs" style="left:0;top:13.5px;width:27px;height:520px;background:#fff"></div>
<div class="abs" style="left:0;top:43.19999999999999px;width:27px;height:1px;background:#e4e4e4"></div>
<div class="rh" style="top:29px">114</div>
<div class="rh" style="top:177px">115</div>
<div class="rh" style="top:192px">116</div>
<div class="rh" style="top:208px">117</div>
<div class="rh" style="top:221px">118</div>
<div class="rh" style="top:235px">119</div>
<div class="rh" style="top:249px">120</div>
<div class="rh" style="top:262px">121</div>
<div class="rh" style="top:276px">122</div>
<div class="rh" style="top:290px">123</div>
<div class="rh" style="top:303px">124</div>
<div class="rh" style="top:317px">125</div>
<div class="rh" style="top:330px">126</div>
<div class="rh" style="top:344px">127</div>
<div class="rh" style="top:358px">128</div>
<div class="rh" style="top:371px">129</div>
<div class="rh" style="top:385px">130</div>
<div class="rh" style="top:398px">131</div>
<div class="rh" style="top:412px">132</div>
<div class="rh" style="top:426px">133</div>
<div class="rh" style="top:439px">134</div>
<div class="rh" style="top:453px">135</div>
<div class="rh" style="top:467px">136</div>
<div class="rh" style="top:480px">137</div>
<div class="rh" style="top:494px">138</div>
<div class="rh" style="top:507px">139</div>
</div>
<div class="abs" style="left:0px;top:717.5px;width:1200px;height:19px;background:#f3f3f3;"></div>
<div class="abs" style="left:0px;top:717.2px;width:1183px;height:0.8px;background:#cfcfcf;"></div>
<svg class="abs" style="left:15px;top:723.5px" width="5" height="7" viewBox="0 0 5 7"><polygon points="4.5,0 4.5,7 0.5,3.5" fill="#3c6b50"/></svg>
<svg class="abs" style="left:33px;top:723.5px" width="5" height="7" viewBox="0 0 5 7"><polygon points="0.5,0 0.5,7 4.5,3.5" fill="#3c6b50"/></svg>
<div class="t" style="left:49.0px;top:721px;font-size:12px;color:#555;transform:scaleX(0.900);font-weight:bold;">...</div>
<div class="abs" style="left:64px;top:718px;width:84.5px;height:17.8px;background:#8dd8f8;"></div>
<div class="t" style="left:72.0px;top:721px;font-size:12.4px;color:#1f3b55;transform:scaleX(0.904);">Beschrieb (D)</div>
<div class="abs" style="left:150.5px;top:718px;width:78.5px;height:17.8px;background:#ff9bd0;"></div>
<div class="t" style="left:159.0px;top:721px;font-size:12.4px;color:#4a2039;transform:scaleX(0.944);">Titelblatt (F)</div>
<div class="abs" style="left:231px;top:718px;width:81px;height:17.8px;background:#ff9bd0;"></div>
<div class="t" style="left:239.5px;top:721px;font-size:12.4px;color:#4a2039;transform:scaleX(0.873);">Beschrieb (F)</div>
<div class="abs" style="left:314px;top:718px;width:77.5px;height:17.8px;background:#90f09c;"></div>
<div class="t" style="left:323.0px;top:721px;font-size:12.4px;color:#1f4a26;transform:scaleX(0.975);">Titelblatt (I)</div>
<div class="abs" style="left:393.5px;top:718px;width:79.0px;height:17.8px;background:#90f09c;"></div>
<div class="t" style="left:401.5px;top:721px;font-size:12.4px;color:#1f4a26;transform:scaleX(0.889);">Beschrieb (I)</div>
<div class="t" style="left:485.5px;top:721px;font-size:12.4px;color:#555;transform:scaleX(0.927);">Kostenverkleich KS Angebot</div>
<div class="t" style="left:650.5px;top:721px;font-size:12.4px;color:#555;transform:scaleX(0.907);">Kosten</div>
<div class="t" style="left:702.0px;top:721px;font-size:12.4px;color:#555;transform:scaleX(0.962);">Preis-Mat-Vorlage</div>
<div class="t" style="left:815.0px;top:721px;font-size:12.4px;color:#555;transform:scaleX(0.863);">Ausmass</div>
<div class="t" style="left:876.0px;top:721px;font-size:12.4px;color:#555;transform:scaleX(0.934);">Logistik und Kran</div>
<div class="abs" style="left:642.5px;top:721px;width:1px;height:12px;background:#d0d0d0;"></div>
<div class="abs" style="left:692.5px;top:721px;width:1px;height:12px;background:#d0d0d0;"></div>
<div class="abs" style="left:807px;top:721px;width:1px;height:12px;background:#d0d0d0;"></div>
<div class="abs" style="left:866.5px;top:721px;width:1px;height:12px;background:#d0d0d0;"></div>
<div class="abs" style="left:975.5px;top:717.5px;width:41px;height:18.3px;background:#fff;"></div>
<div class="abs" style="left:975.5px;top:734px;width:25px;height:1.8px;background:#217346;"></div>
<div class="t" style="left:981.0px;top:721px;font-size:12.4px;color:#217346;transform:scaleX(0.949);font-weight:bold;">Fen ...</div>
<svg class="abs" style="left:1022px;top:720px" width="14" height="14" viewBox="0 0 14 14"><circle cx="7" cy="7" r="6.2" fill="none" stroke="#666" stroke-width="1.1"/><path d="M7,3.6V10.4M3.6,7H10.4" stroke="#666" stroke-width="1.3"/></svg>
<div class="abs" style="left:1046.5px;top:723px;width:1.2px;height:1.2px;background:#999;"></div>
<div class="abs" style="left:1046.5px;top:726px;width:1.2px;height:1.2px;background:#999;"></div>
<div class="abs" style="left:1046.5px;top:729px;width:1.2px;height:1.2px;background:#999;"></div>
<div class="abs" style="left:1058.5px;top:720px;width:125.5px;height:14.5px;background:#f0f0f0;"></div>
<div class="abs" style="left:1058.5px;top:720px;width:14px;height:14.5px;background:#fff;border:1px solid #d4d4d4;"></div>
<svg class="abs" style="left:1063px;top:723.5px" width="5" height="7" viewBox="0 0 5 7"><polygon points="4.5,0 4.5,7 0.5,3.5" fill="#666"/></svg>
<div class="abs" style="left:1072.5px;top:720px;width:15px;height:14.5px;background:#fff;border:1px solid #d4d4d4;"></div>
<div class="abs" style="left:1169.5px;top:720px;width:14.5px;height:14.5px;background:#fff;border:1px solid #d4d4d4;"></div>
<svg class="abs" style="left:1175px;top:723.5px" width="5" height="7" viewBox="0 0 5 7"><polygon points="0.5,0 0.5,7 4.5,3.5" fill="#666"/></svg>
<div class="abs" style="left:0px;top:736px;width:1200px;height:28px;background:#217346;"></div>
<div class="t" style="left:6.0px;top:747px;font-size:10px;color:#fff;transform:scaleX(0.761);">BEREIT</div>
<svg class="abs" style="left:73px;top:744px" width="15" height="14" viewBox="0 0 15 14"><rect x="2.5" y="3" width="12" height="10.5" fill="none" stroke="#e6efe9" stroke-width="1"/><rect x="2.5" y="3" width="12" height="3" fill="#e6efe9"/><path d="M6.5,7V12.5M9,7V12.5M11.5,7V12.5M5,9.5H13" stroke="#cfe0d5" stroke-width="0.8"/><circle cx="3" cy="3" r="3" fill="#fff"/></svg>
<div class="abs" style="left:963px;top:736px;width:27.5px;height:28px;background:#185c37;"></div>
<svg class="abs" style="left:970px;top:743.5px" width="15" height="15" viewBox="0 0 15 15"><rect x="0.5" y="0.5" width="14" height="14" fill="none" stroke="#e6efe9"/><path d="M5.2,0.5V14.5M9.8,0.5V14.5M0.5,5.2H14.5M0.5,9.8H14.5" stroke="#e6efe9"/></svg>
<svg class="abs" style="left:998px;top:743.5px" width="16" height="15" viewBox="0 0 16 15"><rect x="0.5" y="0.5" width="15" height="14" fill="none" stroke="#b9d1c2"/><rect x="3.5" y="2.5" width="9" height="10" fill="none" stroke="#b9d1c2"/><path d="M5.5,5H10.5M5.5,7.5H10.5M5.5,10H10.5" stroke="#b9d1c2" stroke-width="0.9"/></svg>
<svg class="abs" style="left:1027px;top:743px" width="16" height="15" viewBox="0 0 16 15"><rect x="0.5" y="0.5" width="15" height="14" fill="none" stroke="#e6efe9"/><rect x="1" y="1" width="3.6" height="8" fill="#fff"/><rect x="5.6" y="1" width="4" height="8" fill="#fff"/></svg>
<div class="abs" style="left:1053px;top:750.3px;width:6px;height:1.8px;background:#fff;"></div>
<div class="abs" style="left:1063px;top:750.8px;width:86.5px;height:1px;background:#dbe8e0;"></div>
<div class="abs" style="left:1104px;top:745.5px;width:3px;height:11px;background:#fff;"></div>
<div class="abs" style="left:1153.5px;top:750.3px;width:7.5px;height:1.8px;background:#fff;"></div>
<div class="abs" style="left:1156.4px;top:747.4px;width:1.8px;height:7.5px;background:#fff;"></div>
<div class="t" style="left:1172.0px;top:747px;font-size:10px;color:#fff;transform:scaleX(0.860);">100%</div>
</div>
</body></html>
